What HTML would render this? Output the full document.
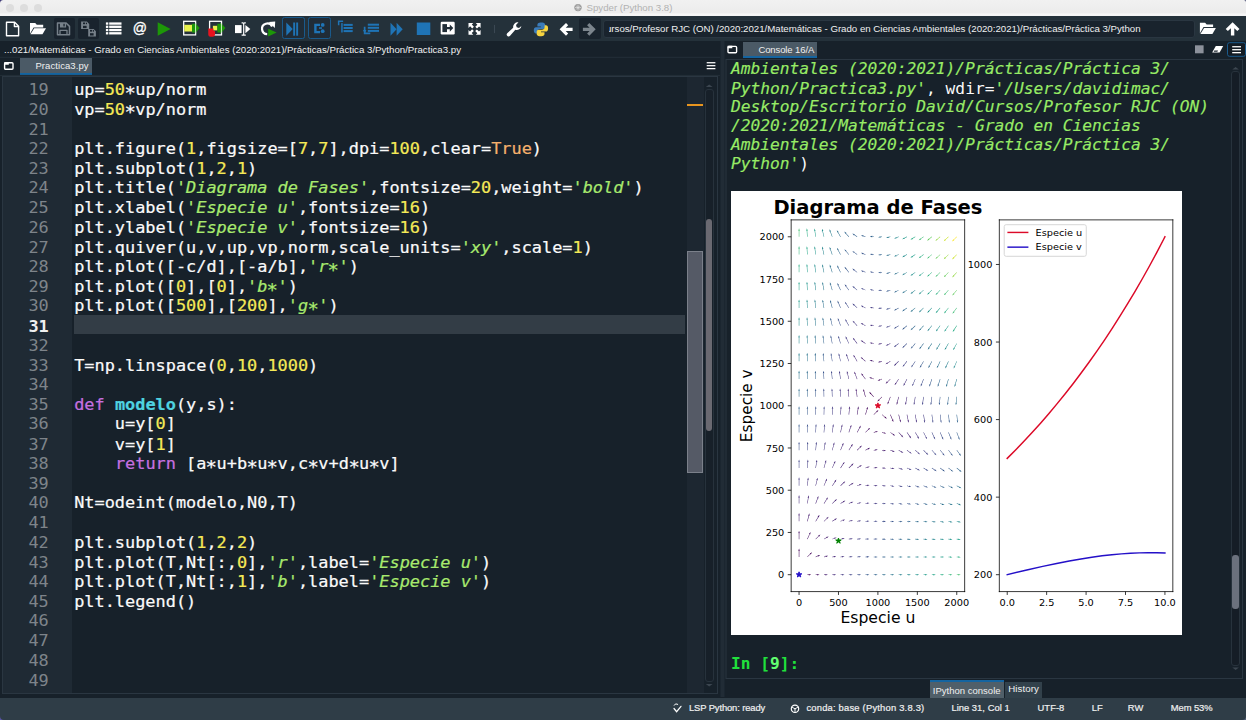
<!DOCTYPE html>
<html lang="es">
<head>
<meta charset="utf-8">
<title>Spyder (Python 3.8)</title>
<style>
*{box-sizing:border-box;margin:0;padding:0}
html,body{width:1246px;height:720px;overflow:hidden;background:#17212a}
body{position:relative;font-family:"Liberation Sans",sans-serif;color:#f0f0f0;font-size:11px}
.abs{position:absolute}
#titlebar{left:0;top:0;width:1246px;height:15.5px;background:linear-gradient(#f1f1f1 0,#ececec 78%,#f7f7f7 90%,#f4f4f4 100%)}
#titlebar .tl{position:absolute;top:4px;width:8px;height:8px;border-radius:50%;background:#dddddd}
#titlebar .t{position:absolute;left:586.5px;top:2.2px;font-size:9.7px;color:#b2b2b2;white-space:nowrap}
#toolbar{left:0;top:15.5px;width:1246px;height:25.500px;background:#24313a}
#toolbar svg{position:absolute;overflow:visible}
.dbox{position:absolute;background:#19232d;border-radius:2px}
.bbox{position:absolute;border:1px solid #1a5a8c;border-radius:2.5px;background:#202c37}
#combo{position:absolute;left:603px;top:4.500px;width:592px;height:18px;background:#19232d;border:1px solid #2a3641;border-radius:3px;overflow:hidden;white-space:nowrap}
#combo i{position:absolute;left:4.6px;top:-1px;width:580px;height:18px;overflow:hidden;font-style:normal}
#combo span{position:absolute;left:-2.6px;top:2.600px;font-size:9.7px;color:#f0f0f0}
#pathrow{left:0;top:41px;width:722px;height:16px;background:#17212a;white-space:nowrap;overflow:hidden}
#pathrow span{position:absolute;left:4px;top:2.6px;font-size:9.7px}
.tab{position:absolute;background:#4b5a66;border-bottom:2.5px solid #1464a0;color:#f0f0f0;font-size:9.5px;white-space:nowrap}
/* editor */
#editor{left:2px;top:76px;width:702px;height:617px;background:#17212a;overflow:hidden}
#gutter{left:0;top:0;width:70px;height:617px;background:#1f2a34}
#flags{left:684.5px;top:0;width:17.5px;height:617px;background:#1d2731}
#code{left:0;top:3.74px;width:684.5px;font-family:"DejaVu Sans Mono","Liberation Mono",monospace;font-size:16.9px;line-height:20.49px;color:#fafafa;transform:scaleY(.96);transform-origin:0 0}
#code div{height:20.49px;padding-left:72.2px;position:relative;white-space:pre;-webkit-text-stroke:.22px}
#code div.cur{background:none}
#curline{left:72.300px;top:238.700px;width:611.200px;height:19.700px;background:#333d46}
#code i{-webkit-text-stroke:0;position:absolute;left:0;width:46.8px;text-align:right;font-style:normal;color:#7e848a}
#code div.cur i{color:#f0f0f0;font-weight:bold}
.a{display:inline-block;font-weight:inherit;transform:translateY(3.2px) scale(1.12)}
.s{color:#a8ea6e;font-style:italic}
.n{color:#f5ea57}
.k{color:#c670e0}
.b{color:#f5b06c}
.f{color:#4fd3e1;font-weight:bold}
/* console */
#console{left:727px;top:59px;width:505px;height:619px;background:#17212a;overflow:hidden}
#ctext{left:4px;top:1px;transform:scaleY(.96);transform-origin:0 0;font-family:"DejaVu Sans Mono","Liberation Mono",monospace;font-size:16.22px;line-height:19.74px;white-space:pre;color:#fafafa}
#ctext .g{color:#98ec66;font-style:italic;-webkit-text-stroke:.15px #98ec66}
#fig{position:absolute;background:#fff;left:4.2px;top:131.9px;width:451px;height:443.85px}
#prompt{left:4px;top:595.5px;transform:scaleY(.96);transform-origin:0 0;font-family:"DejaVu Sans Mono","Liberation Mono",monospace;font-size:16.22px;line-height:19.74px;white-space:pre;color:#20e03c;font-weight:bold}
#status{left:0;top:698px;width:1246px;height:22px;background:#2f3d47}
#status span{position:absolute;top:3.7px;-webkit-text-stroke:.2px #f0f0f0;font-size:9.4px;white-space:nowrap;color:#f0f0f0}
</style>
</head>
<body>
<div id="titlebar" class="abs">
  <div class="tl" style="left:5.7px"></div><div class="tl" style="left:20px"></div><div class="tl" style="left:34.3px"></div>
  <div class="t" id="t_title" style="letter-spacing:-0.014px">Spyder (Python 3.8)</div>
</div>

<div id="toolbar" class="abs">
  <div class="dbox" style="left:53.800px;top:2.600px;width:21px;height:21.400px"></div>
  <div class="dbox" style="left:77.900px;top:2.600px;width:21px;height:21.400px"></div>
  <div class="bbox" style="left:282px;top:1.700px;width:23.200px;height:21.800px"></div>
  <div class="bbox" style="left:308.100px;top:1.700px;width:23.400px;height:21.800px"></div>
  <div class="dbox" style="left:579.400px;top:2.500px;width:21.400px;height:21px"></div>
  <svg style="left:0;top:0;width:1246px;height:25.500px" viewBox="0 15.500 1246 25.500">
<g fill="none" stroke="#fff" stroke-width="1.4" stroke-linejoin="round">
  <!-- new file -->
  <path d="M6.5 21.8h8.2l3.9 3.9v9.5h-12.1z"/><path d="M14.4 22v4h4"/>
</g>
<!-- open folder -->
<path fill="#fff" d="M30 22.6h5.2l1.6 1.7h6.4v2.6h-9.6l-3.6 6.3z"/><path fill="#fff" d="M34.2 27.7h11.8l-3.5 6.1h-12z"/>
<!-- save (disabled) -->
<g fill="none" stroke="#77818a" stroke-width="1.5" stroke-linejoin="round">
  <path d="M57.500 22.500h8.600l3.400 3.400v8.300h-12z"/>
  <path d="M60 34v-4.200h7v4.200" stroke-width="1.300"/>
</g>
<path fill="#77818a" d="M59.900 22.500h6.200v4.600h-6.200z"/><rect x="63.400" y="23.300" width="1.300" height="2.600" fill="#19232d"/>
<!-- save all -->
<g fill="#77818a">
  <path d="M81.100 21.100h5.800l2.300 2.300v5.100h-8.100z"/>
  <path d="M88.200 28.500h5.400l2.300 2.300v5.100h-7.700z"/>
</g>
<g fill="#19232d">
  <rect x="83" y="22" width="2.200" height="1.700"/><rect x="86" y="22.200" width="1" height="1.500"/><rect x="83" y="25.300" width="3.600" height="2.300"/>
  <rect x="90" y="29.400" width="2.200" height="1.700"/><rect x="93" y="29.600" width="1" height="1.500"/><rect x="90" y="32.700" width="3.600" height="2.300"/>
</g>
<!-- list -->
<g fill="#fff">
  <rect x="105.9" y="21.9" width="2.4" height="2.3"/><rect x="109.2" y="21.9" width="12.3" height="2.3"/>
  <rect x="105.9" y="25.15" width="2.4" height="2.3"/><rect x="109.2" y="25.15" width="12.3" height="2.3"/>
  <rect x="105.9" y="28.4" width="2.4" height="2.3"/><rect x="109.2" y="28.4" width="12.3" height="2.3"/>
  <rect x="105.9" y="31.65" width="2.4" height="2.3"/><rect x="109.2" y="31.65" width="12.3" height="2.3"/>
</g>
<!-- @ -->
<text x="139.8" y="32.3" text-anchor="middle" font-family="Liberation Sans, sans-serif" font-size="14" fill="#fff" stroke="#fff" stroke-width=".35">@</text>
<!-- run -->
<path fill="#1d9708" d="M157.7 21.7l12.9 6.75-12.9 6.75z"/>
<!-- run cell -->
<rect x="183.700" y="20.800" width="11.900" height="13.600" fill="none" stroke="#fff" stroke-width="1.300"/>
<rect x="184.300" y="24.300" width="7.700" height="6.700" fill="#e9f24c"/>
<path fill="#1d9708" d="M192 23.300h3v-1l4.600 5.300-4.600 5.300v-1h-3z"/><rect x="195" y="22.500" width="1.100" height="10.200" fill="#e8ffe0" opacity=".8"/>
<!-- run cell advance -->
<rect x="209.600" y="20.800" width="11.900" height="13.600" fill="none" stroke="#fff" stroke-width="1.300"/>
<rect x="212.900" y="25.300" width="4.500" height="4.600" fill="#e9f24c"/>
<path fill="#e8121d" d="M208.300 28h5.200v2.500h1.500v3.500q0 2.300-2.300 2.300h-2.200q-2.200 0-2.200-2.300z"/>
<path fill="#1d9708" d="M217.400 23.300h3.400v-1l4.600 5.300-4.600 5.300v-1h-3.400z"/><rect x="220.900" y="22.500" width="1.100" height="10.200" fill="#e8ffe0" opacity=".8"/>
<!-- run selection -->
<rect x="235" y="24.6" width="6.6" height="8" fill="#fff"/>
<path fill="none" stroke="#fff" stroke-width="1.2" d="M241.6 22.4h1.2q.9 0 .9.9v10.4q0 .9-.9.9h-1.2M245.8 22.4h-1.2q-.9 0-.9.9v10.4q0 .9.900.9h1.2"/>
<path fill="#fff" d="M245.4 24.4l4.9 4.2-4.900 4.200z"/>
<!-- re-run -->
<path fill="none" stroke="#fff" stroke-width="2.2" d="M267.200 33.600a5.300 5.300 0 1 1 4.900-7.600"/>
<path fill="#fff" d="M268.800 21.400l6.400-.4-.4 6.500z"/>
<path fill="#1d9708" d="M268.200 28.200l8.400 3.900-8.400 4z"/>
<!-- debug -->
<g fill="#1f74b6">
  <path d="M286.300 22l6.400 6.600-6.400 6.600z"/><rect x="293.200" y="22" width="1.900" height="13.200"/><rect x="296.200" y="22" width="1.900" height="13.200"/>
  <!-- step -->
  <path d="M314.200 23.300h5.800v2.200h-3.400v5h3.400v2.200h-5.800z"/><circle cx="322.700" cy="24.400" r="1.900"/><circle cx="322.700" cy="30.700" r="1.900"/><rect x="319" y="26.800" width="3" height="1.500"/>
  <!-- step into -->
  <path d="M337.900 19.900h5.200v1.500h-3.700v3.300h-1.500z"/><rect x="341.200" y="22.600" width="1.500" height="9.400"/>
  <rect x="343.600" y="23.400" width="9.100" height="2"/><rect x="343.600" y="26.500" width="9.100" height="2"/><rect x="343.600" y="29.600" width="9.100" height="2"/>
  <!-- step return -->
  <rect x="367.800" y="23.200" width="11.200" height="2"/><rect x="367.800" y="26.300" width="11.200" height="2"/><rect x="367.800" y="29.400" width="11.200" height="2"/>
  <path d="M363.800 26.300h1.700v5.800h4.800v1.600h-6.500z"/><path d="M363 29.500l1.700 3.400 1.700-3.400z"/>
  <!-- continue -->
  <path d="M390.500 22.300l6.100 6.450-6.100 6.450z"/><path d="M396.600 22.300l6.100 6.450-6.100 6.450z"/>
  <!-- stop -->
  <rect x="416.800" y="22" width="13.500" height="12.500"/>
</g>
<!-- maximize pane -->
<rect x="440.700" y="21.200" width="14" height="12.800" rx="1.200" fill="#fff"/>
<rect x="442.400" y="23.600" width="4.600" height="8" fill="#222e38"/>
<path fill="#222e38" d="M447 26.500h2.800v-2.500l3.500 3.600-3.500 3.600v-2.500h-2.800z"/>
<!-- fullscreen -->
<g fill="#fff">
  <path d="M468.500 22.600h4.800l-1.500 1.500 2.100 2.100-1.700 1.700-2.100-2.100-1.600 1.600z"/>
  <path d="M480.600 22.600v4.800l-1.500-1.500-2.100 2.100-1.700-1.700 2.100-2.100-1.600-1.600z"/>
  <path d="M468.500 34.200v-4.800l1.500 1.500 2.100-2.100 1.700 1.700-2.100 2.100 1.600 1.600z"/>
  <path d="M480.600 34.200h-4.800l1.500-1.500-2.100-2.100 1.700-1.700 2.100 2.100 1.600-1.600z"/>
</g>
<rect x="494" y="24.400" width="1" height="8.200" fill="#3b4853"/>
<!-- wrench -->
<path fill="#fff" d="M521.400 25.400a4.700 4.700 0 0 1-6.100 3.800l-5.200 6a1.900 1.900 0 0 1-2.900-2.500l6-5.400a4.700 4.700 0 0 1 5.300-5.500l-2.500 2.700.7 2.300 2.300.6z"/>
<!-- python -->
<path fill="#3b7cba" d="M540.700 22c-2.600 0-3.300 1.100-3.300 2.300v1.700h3.500v.7h-4.900c-1.400 0-2.200 1.200-2.200 3.100 0 2 .8 3.200 2.200 3.200h1.300v-2c0-1.400 1.200-2.500 2.600-2.500h3.300c1.100 0 2-.9 2-2v-2.200c0-1.200-1.200-2.300-2.700-2.300z"/>
<path fill="#f6d340" d="M541.200 35.700c2.600 0 3.300-1.100 3.300-2.300v-1.700h-3.500v-.7h4.900c1.400 0 2.200-1.200 2.200-3.100 0-2-.8-3.200-2.200-3.200h-1.300v2c0 1.400-1.200 2.500-2.600 2.500h-3.300c-1.100 0-2 .9-2 2v2.200c0 1.200 1.200 2.300 2.700 2.300z"/>
<!-- back -->
<path fill="#fff" d="M559.600 28.850l6.400-6.300 2.200 2.200-2.500 2.400h6.900v3.400h-6.900l2.500 2.400-2.200 2.200z"/>
<!-- forward (disabled) -->
<path fill="#7c858d" d="M595.700 28.850l-6.400-6.300-2.200 2.200 2.500 2.400h-6.700v3.400h6.700l-2.500 2.400 2.200 2.200z"/>
<!-- folder right -->
<path fill="#fff" d="M1199.900 22.200h5.200l1.600 1.700h6.400v2.600h-9.600l-3.600 6.300z"/><path fill="#fff" d="M1204.100 27.400h11.800l-3.500 6.100h-12z"/>
<!-- up arrow -->
<path fill="#fff" d="M1232.600 21.800l6.900 6.600-2.200 2.200-3-2.900v7.300h-3.400v-7.300l-3 2.900-2.200-2.200z"/>
</svg>

  <div id="combo"><i><span id="t_combo" style="letter-spacing:-0.024px">ursos/Profesor RJC (ON) /2020:2021/Matemáticas - Grado en Ciencias Ambientales (2020:2021)/Prácticas/Práctica 3/Python</span></i></div>
</div>

<div id="pathrow" class="abs"><span id="t_path" style="letter-spacing:-0.012px">...021/Matemáticas - Grado en Ciencias Ambientales (2020:2021)/Prácticas/Práctica 3/Python/Practica3.py</span></div>

<!-- left tab row -->
<div class="tab" style="left:19.5px;top:58px;width:72.5px;height:16.5px"><span id="t_tab1" style="letter-spacing:0.077px;position:absolute;left:15.9px;top:2px">Practica3.py</span></div>

<div id="editor" class="abs">
  <div id="gutter" class="abs"></div>
  <div id="flags" class="abs">
    <div class="abs" style="left:0.7px;top:27.9px;width:15.6px;height:2.2px;background:#e8951f"></div>
    <div class="abs" style="left:0px;top:174.9px;width:16.7px;height:222px;background:#555a66;border:1px solid #7b808a"></div>
  </div>
  <div id="curline" class="abs"></div>
  <div id="code" class="abs">
<div><i>19</i>up=<span class="n">50</span><b class="a">*</b>up/norm</div><div><i>20</i>vp=<span class="n">50</span><b class="a">*</b>vp/norm</div><div><i>21</i></div><div><i>22</i>plt.figure(<span class="n">1</span>,figsize=[<span class="n">7</span>,<span class="n">7</span>],dpi=<span class="n">100</span>,clear=<span class="b">True</span>)</div><div><i>23</i>plt.subplot(<span class="n">1</span>,<span class="n">2</span>,<span class="n">1</span>)</div><div><i>24</i>plt.title(<span class="s">'Diagrama de Fases'</span>,fontsize=<span class="n">20</span>,weight=<span class="s">'bold'</span>)</div><div><i>25</i>plt.xlabel(<span class="s">'Especie u'</span>,fontsize=<span class="n">16</span>)</div><div><i>26</i>plt.ylabel(<span class="s">'Especie v'</span>,fontsize=<span class="n">16</span>)</div><div><i>27</i>plt.quiver(u,v,up,vp,norm,scale_units=<span class="s">'xy'</span>,scale=<span class="n">1</span>)</div><div><i>28</i>plt.plot([-c/d],[-a/b],<span class="s">'r<b class="a">*</b>'</span>)</div><div><i>29</i>plt.plot([<span class="n">0</span>],[<span class="n">0</span>],<span class="s">'b<b class="a">*</b>'</span>)</div><div><i>30</i>plt.plot([<span class="n">500</span>],[<span class="n">200</span>],<span class="s">'g<b class="a">*</b>'</span>)</div><div class="cur"><i>31</i></div><div><i>32</i></div><div><i>33</i>T=np.linspace(<span class="n">0</span>,<span class="n">10</span>,<span class="n">1000</span>)</div><div><i>34</i></div><div><i>35</i><span class="k">def</span> <span class="f">modelo</span>(y,s):</div><div><i>36</i>    u=y[<span class="n">0</span>]</div><div><i>37</i>    v=y[<span class="n">1</span>]</div><div><i>38</i>    <span class="k">return</span> [a<b class="a">*</b>u+b<b class="a">*</b>u<b class="a">*</b>v,c<b class="a">*</b>v+d<b class="a">*</b>u<b class="a">*</b>v]</div><div><i>39</i></div><div><i>40</i>Nt=odeint(modelo,N0,T)</div><div><i>41</i></div><div><i>42</i>plt.subplot(<span class="n">1</span>,<span class="n">2</span>,<span class="n">2</span>)</div><div><i>43</i>plt.plot(T,Nt[:,<span class="n">0</span>],<span class="s">'r'</span>,label=<span class="s">'Especie u'</span>)</div><div><i>44</i>plt.plot(T,Nt[:,<span class="n">1</span>],<span class="s">'b'</span>,label=<span class="s">'Especie v'</span>)</div><div><i>45</i>plt.legend()</div><div><i>46</i></div><div><i>47</i></div><div><i>48</i></div><div><i>49</i></div>  </div>
</div>
<!-- editor scrollbar -->
<div class="abs" style="left:705px;top:89px;width:8.5px;height:593px;background:#172029;border:1px solid #27323c;border-radius:3px"></div>
<div class="abs" style="left:706.2px;top:219px;width:6px;height:212px;background:#6a6971;border-radius:3px"></div>

<!-- right pane tab row -->
<div class="tab" style="left:743px;top:42.2px;width:73.8px;height:16px"><span id="t_tab2" style="letter-spacing:-0.104px;position:absolute;left:15.4px;top:1.7px">Console 16/A</span></div>

<div id="console" class="abs">
<div id="ctext" class="abs"><span class="g">Ambientales (2020:2021)/Prácticas/Práctica 3/
Python/Practica3.py'</span>, wdir=<span class="g">'/Users/davidimac/
Desktop/Escritorio David/Cursos/Profesor RJC (ON)
/2020:2021/Matemáticas - Grado en Ciencias
Ambientales (2020:2021)/Prácticas/Práctica 3/
Python'</span>)</div>
<svg id="fig" viewBox="-2.45 -1.77 461.58 463.4" preserveAspectRatio="none"> <defs> <style>#fig *{stroke-linejoin: round; stroke-linecap: butt}</style> </defs> <g id="figure_1"> <g id="patch_1"> <path d="M 0 459.84 L 459.99 459.84 L 459.99 0 L 0 0 z " style="fill: #ffffff"/> </g> <g id="axes_1"> <g id="patch_2"> <path d="M 59.13 416.47 L 236.68 416.47 L 236.68 28.39 L 59.13 28.39 z " style="fill: #ffffff"/> </g> <g id="Quiver_1"> <path clip-path="url(#pe929c7379b)" style="fill: none"/> <path d="M 75.70 398.57 L 77.33 398.57 L 77.07 398.03 L 79.73 398.83 L 77.07 399.63 L 77.33 399.10 L 75.70 399.10 L 75.70 398.57 " clip-path="url(#pe929c7379b)" style="fill: #450559"/> <path d="M 84.19 398.57 L 85.83 398.57 L 85.56 398.03 L 88.23 398.83 L 85.56 399.63 L 85.83 399.10 L 84.19 399.10 L 84.19 398.57 " clip-path="url(#pe929c7379b)" style="fill: #471365"/> <path d="M 92.69 398.57 L 94.32 398.57 L 94.06 398.03 L 96.72 398.83 L 94.06 399.63 L 94.32 399.10 L 92.69 399.10 L 92.69 398.57 " clip-path="url(#pe929c7379b)" style="fill: #482071"/> <path d="M 101.18 398.57 L 102.82 398.57 L 102.55 398.03 L 105.22 398.83 L 102.55 399.63 L 102.82 399.10 L 101.18 399.10 L 101.18 398.57 " clip-path="url(#pe929c7379b)" style="fill: #472d7b"/> <path d="M 109.68 398.57 L 111.31 398.57 L 111.05 398.03 L 113.71 398.83 L 111.05 399.63 L 111.31 399.10 L 109.68 399.10 L 109.68 398.57 " clip-path="url(#pe929c7379b)" style="fill: #443983"/> <path d="M 118.17 398.57 L 119.81 398.57 L 119.54 398.03 L 122.21 398.83 L 119.54 399.63 L 119.81 399.10 L 118.17 399.10 L 118.17 398.57 " clip-path="url(#pe929c7379b)" style="fill: #404588"/> <path d="M 126.67 398.57 L 128.30 398.57 L 128.04 398.03 L 130.70 398.83 L 128.04 399.63 L 128.30 399.10 L 126.67 399.10 L 126.67 398.57 " clip-path="url(#pe929c7379b)" style="fill: #3c4f8a"/> <path d="M 135.16 398.57 L 136.80 398.57 L 136.53 398.03 L 139.20 398.83 L 136.53 399.63 L 136.80 399.10 L 135.16 399.10 L 135.16 398.57 " clip-path="url(#pe929c7379b)" style="fill: #375a8c"/> <path d="M 143.66 398.57 L 145.29 398.57 L 145.03 398.03 L 147.69 398.83 L 145.03 399.63 L 145.29 399.10 L 143.66 399.10 L 143.66 398.57 " clip-path="url(#pe929c7379b)" style="fill: #32648e"/> <path d="M 152.15 398.57 L 153.79 398.57 L 153.52 398.03 L 156.19 398.83 L 153.52 399.63 L 153.79 399.10 L 152.15 399.10 L 152.15 398.57 " clip-path="url(#pe929c7379b)" style="fill: #2e6e8e"/> <path d="M 160.65 398.57 L 162.28 398.57 L 162.02 398.03 L 164.68 398.83 L 162.02 399.63 L 162.28 399.10 L 160.65 399.10 L 160.65 398.57 " clip-path="url(#pe929c7379b)" style="fill: #2a768e"/> <path d="M 169.14 398.57 L 170.78 398.57 L 170.51 398.03 L 173.18 398.83 L 170.51 399.63 L 170.78 399.10 L 169.14 399.10 L 169.14 398.57 " clip-path="url(#pe929c7379b)" style="fill: #27808e"/> <path d="M 177.64 398.57 L 179.27 398.57 L 179.01 398.03 L 181.67 398.83 L 179.01 399.63 L 179.27 399.10 L 177.64 399.10 L 177.64 398.57 " clip-path="url(#pe929c7379b)" style="fill: #23898e"/> <path d="M 186.13 398.57 L 187.77 398.57 L 187.50 398.03 L 190.17 398.83 L 187.50 399.63 L 187.77 399.10 L 186.13 399.10 L 186.13 398.57 " clip-path="url(#pe929c7379b)" style="fill: #20928c"/> <path d="M 194.63 398.57 L 196.26 398.57 L 196.00 398.03 L 198.66 398.83 L 196.00 399.63 L 196.26 399.10 L 194.63 399.10 L 194.63 398.57 " clip-path="url(#pe929c7379b)" style="fill: #1e9c89"/> <path d="M 203.12 398.57 L 204.76 398.57 L 204.49 398.03 L 207.16 398.83 L 204.49 399.63 L 204.76 399.10 L 203.12 399.10 L 203.12 398.57 " clip-path="url(#pe929c7379b)" style="fill: #20a486"/> <path d="M 211.62 398.57 L 213.25 398.57 L 212.99 398.03 L 215.65 398.83 L 212.99 399.63 L 213.25 399.10 L 211.62 399.10 L 211.62 398.57 " clip-path="url(#pe929c7379b)" style="fill: #27ad81"/> <path d="M 220.11 398.57 L 221.75 398.57 L 221.48 398.03 L 224.15 398.83 L 221.48 399.63 L 221.75 399.10 L 220.11 399.10 L 220.11 398.57 " clip-path="url(#pe929c7379b)" style="fill: #34b679"/> <path d="M 228.61 398.57 L 230.24 398.57 L 229.98 398.03 L 232.64 398.83 L 229.98 399.63 L 230.24 399.10 L 228.61 399.10 L 228.61 398.57 " clip-path="url(#pe929c7379b)" style="fill: #44bf70"/> <path d="M 66.93 380.26 L 66.93 373.84 L 66.40 374.11 L 67.20 371.44 L 68.00 374.11 L 67.47 373.84 L 67.47 380.26 L 66.93 380.26 " clip-path="url(#pe929c7379b)" style="fill: #450559"/> <path d="M 75.51 380.08 L 78.66 376.92 L 78.10 376.73 L 80.54 375.41 L 79.23 377.86 L 79.04 377.30 L 75.88 380.45 L 75.51 380.08 " clip-path="url(#pe929c7379b)" style="fill: #46085c"/> <path d="M 84.08 380.02 L 86.58 378.92 L 86.12 378.54 L 88.88 378.19 L 86.77 380.00 L 86.80 379.40 L 84.30 380.51 L 84.08 380.02 " clip-path="url(#pe929c7379b)" style="fill: #471365"/> <path d="M 92.62 380.01 L 94.63 379.49 L 94.24 379.04 L 97.02 379.16 L 94.64 380.59 L 94.77 380.01 L 92.75 380.52 L 92.62 380.01 " clip-path="url(#pe929c7379b)" style="fill: #481d6f"/> <path d="M 101.14 380.00 L 102.94 379.71 L 102.59 379.23 L 105.35 379.59 L 102.85 380.80 L 103.03 380.23 L 101.22 380.53 L 101.14 380.00 " clip-path="url(#pe929c7379b)" style="fill: #482878"/> <path d="M 109.65 380.00 L 111.36 379.82 L 111.04 379.32 L 113.77 379.83 L 111.21 380.90 L 111.42 380.35 L 109.70 380.53 L 109.65 380.00 " clip-path="url(#pe929c7379b)" style="fill: #46337f"/> <path d="M 118.15 380.00 L 119.82 379.88 L 119.52 379.37 L 122.23 379.98 L 119.63 380.96 L 119.86 380.41 L 118.19 380.53 L 118.15 380.00 " clip-path="url(#pe929c7379b)" style="fill: #433e85"/> <path d="M 126.65 380.00 L 128.30 379.93 L 128.02 379.41 L 130.71 380.09 L 128.08 381.00 L 128.33 380.46 L 126.68 380.53 L 126.65 380.00 " clip-path="url(#pe929c7379b)" style="fill: #3f4788"/> <path d="M 135.15 380.00 L 136.80 379.96 L 136.52 379.43 L 139.20 380.17 L 136.55 381.03 L 136.81 380.49 L 135.17 380.53 L 135.15 380.00 " clip-path="url(#pe929c7379b)" style="fill: #3b518b"/> <path d="M 143.65 380.00 L 145.29 379.99 L 145.02 379.46 L 147.69 380.24 L 145.03 381.05 L 145.30 380.52 L 143.66 380.53 L 143.65 380.00 " clip-path="url(#pe929c7379b)" style="fill: #375b8d"/> <path d="M 152.15 380.00 L 153.79 380.01 L 153.53 379.47 L 156.19 380.29 L 153.52 381.07 L 153.79 380.54 L 152.15 380.53 L 152.15 380.00 " clip-path="url(#pe929c7379b)" style="fill: #33638d"/> <path d="M 160.65 380.00 L 162.29 380.02 L 162.03 379.49 L 164.68 380.33 L 162.01 381.08 L 162.28 380.56 L 160.64 380.53 L 160.65 380.00 " clip-path="url(#pe929c7379b)" style="fill: #2f6c8e"/> <path d="M 169.15 380.00 L 170.79 380.04 L 170.54 379.50 L 173.18 380.36 L 170.50 381.10 L 170.78 380.57 L 169.13 380.53 L 169.15 380.00 " clip-path="url(#pe929c7379b)" style="fill: #2b748e"/> <path d="M 177.64 380.00 L 179.29 380.05 L 179.04 379.51 L 181.68 380.39 L 178.99 381.11 L 179.27 380.58 L 177.63 380.53 L 177.64 380.00 " clip-path="url(#pe929c7379b)" style="fill: #287d8e"/> <path d="M 186.14 380.00 L 187.79 380.06 L 187.54 379.52 L 190.17 380.42 L 187.48 381.11 L 187.77 380.59 L 186.12 380.53 L 186.14 380.00 " clip-path="url(#pe929c7379b)" style="fill: #25848e"/> <path d="M 194.64 380.00 L 196.29 380.07 L 196.04 379.52 L 198.67 380.44 L 195.98 381.12 L 196.26 380.60 L 194.61 380.53 L 194.64 380.00 " clip-path="url(#pe929c7379b)" style="fill: #228d8d"/> <path d="M 203.13 380.00 L 204.79 380.08 L 204.55 379.53 L 207.17 380.46 L 204.47 381.13 L 204.76 380.61 L 203.11 380.53 L 203.13 380.00 " clip-path="url(#pe929c7379b)" style="fill: #1f958b"/> <path d="M 211.63 380.00 L 213.29 380.08 L 213.05 379.54 L 215.67 380.47 L 212.96 381.13 L 213.26 380.62 L 211.60 380.53 L 211.63 380.00 " clip-path="url(#pe929c7379b)" style="fill: #1f9e89"/> <path d="M 220.12 380.00 L 221.78 380.09 L 221.55 379.54 L 224.16 380.49 L 221.46 381.14 L 221.75 380.62 L 220.10 380.53 L 220.12 380.00 " clip-path="url(#pe929c7379b)" style="fill: #21a685"/> <path d="M 228.62 380.00 L 230.28 380.10 L 230.05 379.55 L 232.66 380.50 L 229.95 381.14 L 230.25 380.63 L 228.59 380.53 L 228.62 380.00 " clip-path="url(#pe929c7379b)" style="fill: #27ad81"/> <path d="M 66.93 361.70 L 66.93 355.27 L 66.40 355.54 L 67.20 352.88 L 68.00 355.54 L 67.47 355.27 L 67.47 361.70 L 66.93 361.70 " clip-path="url(#pe929c7379b)" style="fill: #471365"/> <path d="M 75.45 361.59 L 77.81 356.25 L 77.21 356.28 L 79.02 354.16 L 78.67 356.92 L 78.29 356.46 L 75.94 361.80 L 75.45 361.59 " clip-path="url(#pe929c7379b)" style="fill: #471365"/> <path d="M 84.00 361.51 L 87.16 358.35 L 86.59 358.16 L 89.04 356.85 L 87.72 359.29 L 87.53 358.73 L 84.38 361.88 L 84.00 361.51 " clip-path="url(#pe929c7379b)" style="fill: #481769"/> <path d="M 92.55 361.46 L 95.35 359.85 L 94.85 359.52 L 97.56 358.88 L 95.65 360.90 L 95.62 360.31 L 92.82 361.93 L 92.55 361.46 " clip-path="url(#pe929c7379b)" style="fill: #481d6f"/> <path d="M 101.09 361.44 L 103.40 360.60 L 102.96 360.19 L 105.74 360.02 L 103.51 361.69 L 103.58 361.10 L 101.27 361.95 L 101.09 361.44 " clip-path="url(#pe929c7379b)" style="fill: #482576"/> <path d="M 109.61 361.44 L 111.59 360.96 L 111.21 360.51 L 113.98 360.66 L 111.58 362.06 L 111.72 361.48 L 109.74 361.95 L 109.61 361.44 " clip-path="url(#pe929c7379b)" style="fill: #472e7c"/> <path d="M 118.13 361.43 L 119.92 361.15 L 119.58 360.67 L 122.33 361.05 L 119.82 362.25 L 120.00 361.68 L 118.21 361.96 L 118.13 361.43 " clip-path="url(#pe929c7379b)" style="fill: #453781"/> <path d="M 126.64 361.43 L 128.34 361.27 L 128.02 360.76 L 130.75 361.31 L 128.17 362.35 L 128.39 361.80 L 126.69 361.96 L 126.64 361.43 " clip-path="url(#pe929c7379b)" style="fill: #423f85"/> <path d="M 135.15 361.43 L 136.80 361.35 L 136.51 360.83 L 139.21 361.49 L 136.59 362.42 L 136.83 361.88 L 135.17 361.96 L 135.15 361.43 " clip-path="url(#pe929c7379b)" style="fill: #3f4889"/> <path d="M 143.65 361.43 L 145.29 361.40 L 145.02 360.88 L 147.69 361.64 L 145.04 362.47 L 145.30 361.94 L 143.66 361.96 L 143.65 361.43 " clip-path="url(#pe929c7379b)" style="fill: #3c508b"/> <path d="M 152.15 361.43 L 153.79 361.45 L 153.53 360.91 L 156.19 361.75 L 153.51 362.51 L 153.79 361.98 L 152.15 361.96 L 152.15 361.43 " clip-path="url(#pe929c7379b)" style="fill: #38598c"/> <path d="M 160.65 361.43 L 162.30 361.49 L 162.06 360.95 L 164.69 361.84 L 162.00 362.54 L 162.28 362.02 L 160.64 361.96 L 160.65 361.43 " clip-path="url(#pe929c7379b)" style="fill: #34618d"/> <path d="M 169.15 361.43 L 170.81 361.52 L 170.58 360.97 L 173.19 361.92 L 170.49 362.57 L 170.78 362.05 L 169.13 361.96 L 169.15 361.43 " clip-path="url(#pe929c7379b)" style="fill: #30698e"/> <path d="M 177.65 361.43 L 179.33 361.55 L 179.10 361.00 L 181.70 361.99 L 178.99 362.59 L 179.29 362.08 L 177.62 361.96 L 177.65 361.43 " clip-path="url(#pe929c7379b)" style="fill: #2d708e"/> <path d="M 186.15 361.43 L 187.84 361.57 L 187.62 361.02 L 190.21 362.04 L 187.48 362.61 L 187.79 362.11 L 186.11 361.96 L 186.15 361.43 " clip-path="url(#pe929c7379b)" style="fill: #2a778e"/> <path d="M 194.65 361.43 L 196.35 361.60 L 196.14 361.04 L 198.71 362.09 L 195.98 362.63 L 196.30 362.13 L 194.60 361.96 L 194.65 361.43 " clip-path="url(#pe929c7379b)" style="fill: #277f8e"/> <path d="M 203.15 361.43 L 204.86 361.62 L 204.66 361.06 L 207.22 362.14 L 204.49 362.65 L 204.81 362.15 L 203.09 361.96 L 203.15 361.43 " clip-path="url(#pe929c7379b)" style="fill: #24868e"/> <path d="M 211.65 361.43 L 213.38 361.63 L 213.17 361.07 L 215.72 362.18 L 212.99 362.66 L 213.31 362.16 L 211.58 361.96 L 211.65 361.43 " clip-path="url(#pe929c7379b)" style="fill: #218e8d"/> <path d="M 220.14 361.43 L 221.89 361.65 L 221.69 361.09 L 224.23 362.21 L 221.49 362.67 L 221.82 362.18 L 220.08 361.96 L 220.14 361.43 " clip-path="url(#pe929c7379b)" style="fill: #1f958b"/> <path d="M 228.64 361.43 L 230.39 361.66 L 230.20 361.10 L 232.73 362.25 L 229.99 362.69 L 230.32 362.19 L 228.57 361.96 L 228.64 361.43 " clip-path="url(#pe929c7379b)" style="fill: #1e9d89"/> <path d="M 66.93 343.13 L 66.93 336.70 L 66.40 336.97 L 67.20 334.31 L 68.00 336.97 L 67.47 336.70 L 67.47 343.13 L 66.93 343.13 " clip-path="url(#pe929c7379b)" style="fill: #482071"/> <path d="M 75.44 343.06 L 76.97 337.05 L 76.39 337.17 L 77.82 334.79 L 77.94 337.57 L 77.49 337.18 L 75.95 343.19 L 75.44 343.06 " clip-path="url(#pe929c7379b)" style="fill: #481d6f"/> <path d="M 83.96 342.99 L 86.71 338.23 L 86.12 338.19 L 88.14 336.29 L 87.50 338.99 L 87.17 338.50 L 84.42 343.26 L 83.96 342.99 " clip-path="url(#pe929c7379b)" style="fill: #481d6f"/> <path d="M 92.50 342.94 L 95.65 339.78 L 95.09 339.60 L 97.53 338.28 L 96.22 340.73 L 96.03 340.16 L 92.87 343.31 L 92.50 342.94 " clip-path="url(#pe929c7379b)" style="fill: #481f70"/> <path d="M 101.04 342.90 L 103.93 341.06 L 103.42 340.76 L 106.10 340.00 L 104.28 342.11 L 104.22 341.51 L 101.32 343.35 L 101.04 342.90 " clip-path="url(#pe929c7379b)" style="fill: #482475"/> <path d="M 109.57 342.88 L 112.01 341.87 L 111.56 341.48 L 114.32 341.20 L 112.17 342.96 L 112.21 342.36 L 109.78 343.37 L 109.57 342.88 " clip-path="url(#pe929c7379b)" style="fill: #482979"/> <path d="M 118.10 342.87 L 120.15 342.32 L 119.76 341.87 L 122.54 341.95 L 120.17 343.42 L 120.29 342.83 L 118.24 343.38 L 118.10 342.87 " clip-path="url(#pe929c7379b)" style="fill: #472f7d"/> <path d="M 126.62 342.86 L 128.43 342.57 L 128.08 342.08 L 130.84 342.44 L 128.34 343.66 L 128.52 343.09 L 126.71 343.39 L 126.62 342.86 " clip-path="url(#pe929c7379b)" style="fill: #453781"/> <path d="M 135.14 342.86 L 136.83 342.72 L 136.51 342.21 L 139.24 342.77 L 136.65 343.80 L 136.87 343.25 L 135.18 343.39 L 135.14 342.86 " clip-path="url(#pe929c7379b)" style="fill: #423f85"/> <path d="M 143.65 342.86 L 145.29 342.82 L 145.01 342.29 L 147.69 343.02 L 145.05 343.89 L 145.30 343.35 L 143.66 343.39 L 143.65 342.86 " clip-path="url(#pe929c7379b)" style="fill: #404688"/> <path d="M 152.16 342.86 L 153.80 342.90 L 153.54 342.36 L 156.19 343.22 L 153.51 343.96 L 153.79 343.43 L 152.14 343.39 L 152.16 342.86 " clip-path="url(#pe929c7379b)" style="fill: #3d4e8a"/> <path d="M 160.66 342.86 L 162.33 342.97 L 162.09 342.42 L 164.70 343.38 L 161.99 344.01 L 162.29 343.50 L 160.63 343.39 L 160.66 342.86 " clip-path="url(#pe929c7379b)" style="fill: #39558c"/> <path d="M 169.17 342.86 L 170.87 343.02 L 170.65 342.47 L 173.23 343.52 L 170.50 344.06 L 170.81 343.56 L 169.11 343.39 L 169.17 342.86 " clip-path="url(#pe929c7379b)" style="fill: #365d8d"/> <path d="M 177.67 342.86 L 179.41 343.08 L 179.21 342.52 L 181.75 343.64 L 179.01 344.10 L 179.34 343.61 L 177.60 343.39 L 177.67 342.86 " clip-path="url(#pe929c7379b)" style="fill: #32648e"/> <path d="M 186.17 342.86 L 187.95 343.13 L 187.76 342.56 L 190.28 343.74 L 187.53 344.14 L 187.87 343.65 L 186.09 343.39 L 186.17 342.86 " clip-path="url(#pe929c7379b)" style="fill: #2f6b8e"/> <path d="M 194.67 342.86 L 196.49 343.17 L 196.32 342.60 L 198.81 343.83 L 196.05 344.18 L 196.40 343.70 L 194.58 343.39 L 194.67 342.86 " clip-path="url(#pe929c7379b)" style="fill: #2c718e"/> <path d="M 203.17 342.86 L 205.03 343.21 L 204.86 342.64 L 207.33 343.92 L 204.57 344.21 L 204.93 343.74 L 203.07 343.39 L 203.17 342.86 " clip-path="url(#pe929c7379b)" style="fill: #2a788e"/> <path d="M 211.67 342.87 L 213.56 343.25 L 213.41 342.68 L 215.86 343.99 L 213.09 344.24 L 213.45 343.77 L 211.56 343.39 L 211.67 342.87 " clip-path="url(#pe929c7379b)" style="fill: #277f8e"/> <path d="M 220.17 342.87 L 222.09 343.29 L 221.95 342.71 L 224.38 344.06 L 221.60 344.27 L 221.98 343.81 L 220.05 343.39 L 220.17 342.87 " clip-path="url(#pe929c7379b)" style="fill: #25858e"/> <path d="M 228.67 342.87 L 230.62 343.32 L 230.48 342.74 L 232.90 344.12 L 230.12 344.30 L 230.50 343.84 L 228.55 343.39 L 228.67 342.87 " clip-path="url(#pe929c7379b)" style="fill: #228c8d"/> <path d="M 66.93 324.56 L 66.93 318.14 L 66.40 318.40 L 67.20 315.74 L 68.00 318.40 L 67.47 318.14 L 67.47 324.56 L 66.93 324.56 " clip-path="url(#pe929c7379b)" style="fill: #472d7b"/> <path d="M 75.43 324.52 L 76.44 318.26 L 75.88 318.44 L 77.09 315.94 L 77.45 318.70 L 76.97 318.35 L 75.96 324.60 L 75.43 324.52 " clip-path="url(#pe929c7379b)" style="fill: #482878"/> <path d="M 83.94 324.47 L 86.01 318.83 L 85.41 318.90 L 87.08 316.67 L 86.91 319.45 L 86.51 319.02 L 84.44 324.65 L 83.94 324.47 " clip-path="url(#pe929c7379b)" style="fill: #482576"/> <path d="M 92.46 324.42 L 95.33 319.89 L 94.74 319.83 L 96.84 318.01 L 96.09 320.69 L 95.78 320.18 L 92.91 324.70 L 92.46 324.42 " clip-path="url(#pe929c7379b)" style="fill: #482475"/> <path d="M 100.99 324.37 L 104.15 321.22 L 103.58 321.03 L 106.03 319.71 L 104.71 322.16 L 104.52 321.59 L 101.37 324.75 L 100.99 324.37 " clip-path="url(#pe929c7379b)" style="fill: #482475"/> <path d="M 109.53 324.34 L 112.45 322.42 L 111.94 322.12 L 114.61 321.33 L 112.82 323.46 L 112.75 322.87 L 109.82 324.78 L 109.53 324.34 " clip-path="url(#pe929c7379b)" style="fill: #482677"/> <path d="M 118.07 324.31 L 120.52 323.27 L 120.07 322.88 L 122.83 322.58 L 120.69 324.36 L 120.73 323.76 L 118.27 324.80 L 118.07 324.31 " clip-path="url(#pe929c7379b)" style="fill: #472a7a"/> <path d="M 126.60 324.30 L 128.63 323.77 L 128.23 323.33 L 131.01 323.43 L 128.64 324.87 L 128.76 324.29 L 126.73 324.82 L 126.60 324.30 " clip-path="url(#pe929c7379b)" style="fill: #472f7d"/> <path d="M 135.12 324.29 L 136.88 324.05 L 136.55 323.56 L 139.29 323.99 L 136.76 325.15 L 136.96 324.58 L 135.20 324.82 L 135.12 324.29 " clip-path="url(#pe929c7379b)" style="fill: #453581"/> <path d="M 143.64 324.29 L 145.29 324.23 L 145.01 323.70 L 147.70 324.39 L 145.07 325.30 L 145.32 324.76 L 143.67 324.82 L 143.64 324.29 " clip-path="url(#pe929c7379b)" style="fill: #443b84"/> <path d="M 152.16 324.29 L 153.81 324.35 L 153.56 323.81 L 156.19 324.71 L 153.50 325.41 L 153.79 324.88 L 152.14 324.82 L 152.16 324.29 " clip-path="url(#pe929c7379b)" style="fill: #414287"/> <path d="M 160.67 324.29 L 162.37 324.46 L 162.16 323.91 L 164.73 324.96 L 162.00 325.50 L 162.32 324.99 L 160.62 324.82 L 160.67 324.29 " clip-path="url(#pe929c7379b)" style="fill: #3f4889"/> <path d="M 169.18 324.29 L 170.97 324.57 L 170.78 324.00 L 173.30 325.19 L 170.54 325.58 L 170.89 325.09 L 169.10 324.82 L 169.18 324.29 " clip-path="url(#pe929c7379b)" style="fill: #3c508b"/> <path d="M 177.69 324.30 L 179.56 324.66 L 179.40 324.09 L 181.86 325.39 L 179.10 325.66 L 179.46 325.19 L 177.58 324.82 L 177.69 324.30 " clip-path="url(#pe929c7379b)" style="fill: #39568c"/> <path d="M 186.19 324.30 L 188.15 324.76 L 188.02 324.18 L 190.43 325.56 L 187.65 325.73 L 188.03 325.28 L 186.07 324.82 L 186.19 324.30 " clip-path="url(#pe929c7379b)" style="fill: #365d8d"/> <path d="M 194.69 324.30 L 196.74 324.85 L 196.62 324.26 L 198.99 325.72 L 196.21 325.81 L 196.60 325.36 L 194.56 324.82 L 194.69 324.30 " clip-path="url(#pe929c7379b)" style="fill: #32648e"/> <path d="M 203.20 324.30 L 205.31 324.93 L 205.21 324.34 L 207.54 325.86 L 204.76 325.88 L 205.16 325.44 L 203.04 324.81 L 203.20 324.30 " clip-path="url(#pe929c7379b)" style="fill: #306a8e"/> <path d="M 211.70 324.30 L 213.88 325.01 L 213.79 324.42 L 216.08 325.99 L 213.30 325.94 L 213.72 325.51 L 211.53 324.81 L 211.70 324.30 " clip-path="url(#pe929c7379b)" style="fill: #2d718e"/> <path d="M 220.20 324.31 L 222.44 325.08 L 222.36 324.49 L 224.62 326.11 L 221.85 326.00 L 222.27 325.58 L 220.02 324.81 L 220.20 324.31 " clip-path="url(#pe929c7379b)" style="fill: #2a778e"/> <path d="M 228.70 324.31 L 231.00 325.14 L 230.93 324.55 L 233.16 326.21 L 230.38 326.05 L 230.81 325.64 L 228.51 324.81 L 228.70 324.31 " clip-path="url(#pe929c7379b)" style="fill: #287d8e"/> <path d="M 66.93 305.99 L 66.93 299.57 L 66.40 299.83 L 67.20 297.17 L 68.00 299.83 L 67.47 299.57 L 67.47 305.99 L 66.93 305.99 " clip-path="url(#pe929c7379b)" style="fill: #443983"/> <path d="M 75.43 305.96 L 76.10 299.61 L 75.54 299.82 L 76.62 297.26 L 77.13 299.99 L 76.63 299.67 L 75.96 306.02 L 75.43 305.96 " clip-path="url(#pe929c7379b)" style="fill: #46337f"/> <path d="M 83.93 305.93 L 85.39 299.87 L 84.81 300.00 L 86.20 297.60 L 86.36 300.38 L 85.90 299.99 L 84.45 306.05 L 83.93 305.93 " clip-path="url(#pe929c7379b)" style="fill: #472e7c"/> <path d="M 92.44 305.89 L 94.70 300.44 L 94.11 300.49 L 95.87 298.33 L 95.58 301.10 L 95.19 300.65 L 92.93 306.09 L 92.44 305.89 " clip-path="url(#pe929c7379b)" style="fill: #482979"/> <path d="M 100.96 305.84 L 103.86 301.40 L 103.27 301.33 L 105.40 299.54 L 104.61 302.21 L 104.31 301.70 L 101.40 306.14 L 100.96 305.84 " clip-path="url(#pe929c7379b)" style="fill: #482677"/> <path d="M 109.49 305.80 L 112.64 302.65 L 112.08 302.46 L 114.52 301.14 L 113.21 303.59 L 113.02 303.02 L 109.86 306.18 L 109.49 305.80 " clip-path="url(#pe929c7379b)" style="fill: #482576"/> <path d="M 118.03 305.77 L 120.94 303.88 L 120.43 303.57 L 123.10 302.80 L 121.30 304.92 L 121.23 304.32 L 118.32 306.21 L 118.03 305.77 " clip-path="url(#pe929c7379b)" style="fill: #482576"/> <path d="M 126.57 305.74 L 128.95 304.80 L 128.51 304.40 L 131.28 304.16 L 129.10 305.88 L 129.15 305.29 L 126.76 306.24 L 126.57 305.74 " clip-path="url(#pe929c7379b)" style="fill: #482878"/> <path d="M 135.11 305.73 L 137.01 305.33 L 136.64 304.87 L 139.41 305.10 L 136.97 306.43 L 137.12 305.85 L 135.21 306.25 L 135.11 305.73 " clip-path="url(#pe929c7379b)" style="fill: #472c7a"/> <path d="M 143.64 305.72 L 145.30 305.62 L 145.00 305.11 L 147.71 305.74 L 145.10 306.70 L 145.34 306.15 L 143.67 306.26 L 143.64 305.72 " clip-path="url(#pe929c7379b)" style="fill: #46307e"/> <path d="M 152.16 305.72 L 153.82 305.82 L 153.59 305.27 L 156.20 306.21 L 153.50 306.86 L 153.79 306.35 L 152.14 306.26 L 152.16 305.72 " clip-path="url(#pe929c7379b)" style="fill: #453581"/> <path d="M 160.69 305.73 L 162.47 306.00 L 162.29 305.43 L 164.80 306.62 L 162.05 307.01 L 162.39 306.52 L 160.61 306.25 L 160.69 305.73 " clip-path="url(#pe929c7379b)" style="fill: #443b84"/> <path d="M 169.20 305.73 L 171.16 306.18 L 171.02 305.60 L 173.43 306.98 L 170.66 307.16 L 171.04 306.70 L 169.08 306.25 L 169.20 305.73 " clip-path="url(#pe929c7379b)" style="fill: #414287"/> <path d="M 177.71 305.73 L 179.84 306.37 L 179.74 305.78 L 182.06 307.31 L 179.28 307.32 L 179.69 306.88 L 177.56 306.24 L 177.71 305.73 " clip-path="url(#pe929c7379b)" style="fill: #3e4989"/> <path d="M 186.22 305.74 L 188.50 306.55 L 188.43 305.96 L 190.67 307.61 L 187.89 307.47 L 188.32 307.06 L 186.04 306.24 L 186.22 305.74 " clip-path="url(#pe929c7379b)" style="fill: #3c508b"/> <path d="M 194.73 305.74 L 197.14 306.73 L 197.09 306.13 L 199.26 307.88 L 196.49 307.61 L 196.94 307.22 L 194.52 306.24 L 194.73 305.74 " clip-path="url(#pe929c7379b)" style="fill: #39568c"/> <path d="M 203.23 305.75 L 205.75 306.89 L 205.73 306.29 L 207.83 308.12 L 205.07 307.75 L 205.54 307.37 L 203.01 306.23 L 203.23 305.75 " clip-path="url(#pe929c7379b)" style="fill: #365d8d"/> <path d="M 211.73 305.75 L 214.35 307.03 L 214.34 306.44 L 216.38 308.33 L 213.64 307.87 L 214.11 307.51 L 211.50 306.23 L 211.73 305.75 " clip-path="url(#pe929c7379b)" style="fill: #32648e"/> <path d="M 220.23 305.75 L 222.93 307.17 L 222.94 306.57 L 224.92 308.52 L 222.20 307.99 L 222.68 307.64 L 219.99 306.23 L 220.23 305.75 " clip-path="url(#pe929c7379b)" style="fill: #306a8e"/> <path d="M 228.73 305.76 L 231.49 307.29 L 231.52 306.69 L 233.46 308.68 L 230.74 308.09 L 231.23 307.75 L 228.48 306.22 L 228.73 305.76 " clip-path="url(#pe929c7379b)" style="fill: #2d718e"/> <path d="M 66.93 287.42 L 66.93 281.00 L 66.40 281.26 L 67.20 278.60 L 68.00 281.26 L 67.47 281.00 L 67.47 287.42 L 66.93 287.42 " clip-path="url(#pe929c7379b)" style="fill: #404588"/> <path d="M 75.43 287.40 L 75.87 281.01 L 75.32 281.24 L 76.30 278.64 L 76.91 281.35 L 76.40 281.05 L 75.96 287.44 L 75.43 287.40 " clip-path="url(#pe929c7379b)" style="fill: #433e85"/> <path d="M 83.93 287.38 L 84.90 281.12 L 84.33 281.30 L 85.53 278.79 L 85.91 281.54 L 85.43 281.20 L 84.45 287.46 L 83.93 287.38 " clip-path="url(#pe929c7379b)" style="fill: #453781"/> <path d="M 92.43 287.35 L 94.04 281.38 L 93.45 281.50 L 94.92 279.14 L 95.00 281.91 L 94.55 281.52 L 92.94 287.49 L 92.43 287.35 " clip-path="url(#pe929c7379b)" style="fill: #472f7d"/> <path d="M 100.94 287.32 L 103.23 281.91 L 102.63 281.95 L 104.41 279.81 L 104.11 282.57 L 103.72 282.12 L 101.43 287.53 L 100.94 287.32 " clip-path="url(#pe929c7379b)" style="fill: #472a7a"/> <path d="M 109.45 287.28 L 112.35 282.81 L 111.76 282.74 L 113.87 280.94 L 113.10 283.61 L 112.79 283.10 L 109.90 287.57 L 109.45 287.28 " clip-path="url(#pe929c7379b)" style="fill: #482576"/> <path d="M 117.98 287.23 L 121.14 284.08 L 120.57 283.89 L 123.02 282.57 L 121.70 285.02 L 121.51 284.45 L 118.36 287.61 L 117.98 287.23 " clip-path="url(#pe929c7379b)" style="fill: #482374"/> <path d="M 126.53 287.19 L 129.39 285.44 L 128.88 285.13 L 131.57 284.42 L 129.71 286.49 L 129.66 285.90 L 126.80 287.65 L 126.53 287.19 " clip-path="url(#pe929c7379b)" style="fill: #482173"/> <path d="M 135.08 287.17 L 137.27 286.46 L 136.85 286.04 L 139.63 285.98 L 137.34 287.56 L 137.43 286.97 L 135.24 287.67 L 135.08 287.17 " clip-path="url(#pe929c7379b)" style="fill: #482173"/> <path d="M 143.63 287.16 L 145.33 286.99 L 145.01 286.49 L 147.74 287.03 L 145.16 288.08 L 145.38 287.52 L 143.68 287.69 L 143.63 287.16 " clip-path="url(#pe929c7379b)" style="fill: #482475"/> <path d="M 152.17 287.16 L 153.86 287.30 L 153.64 286.75 L 156.23 287.77 L 153.50 288.34 L 153.81 287.83 L 152.13 287.69 L 152.17 287.16 " clip-path="url(#pe929c7379b)" style="fill: #482979"/> <path d="M 160.71 287.16 L 162.67 287.62 L 162.53 287.04 L 164.94 288.43 L 162.17 288.60 L 162.55 288.14 L 160.58 287.68 L 160.71 287.16 " clip-path="url(#pe929c7379b)" style="fill: #472f7d"/> <path d="M 169.23 287.17 L 171.51 287.99 L 171.44 287.39 L 173.68 289.04 L 170.90 288.90 L 171.33 288.49 L 169.05 287.67 L 169.23 287.17 " clip-path="url(#pe929c7379b)" style="fill: #453581"/> <path d="M 177.75 287.18 L 180.30 288.36 L 180.28 287.76 L 182.36 289.60 L 179.61 289.21 L 180.07 288.84 L 177.52 287.66 L 177.75 287.18 " clip-path="url(#pe929c7379b)" style="fill: #443b84"/> <path d="M 186.26 287.19 L 189.01 288.70 L 189.03 288.11 L 190.98 290.09 L 188.26 289.51 L 188.75 289.17 L 186.00 287.65 L 186.26 287.19 " clip-path="url(#pe929c7379b)" style="fill: #414287"/> <path d="M 194.77 287.20 L 197.65 289.01 L 197.71 288.42 L 199.54 290.51 L 196.86 289.77 L 197.37 289.46 L 194.48 287.65 L 194.77 287.20 " clip-path="url(#pe929c7379b)" style="fill: #3e4a89"/> <path d="M 203.27 287.20 L 206.25 289.28 L 206.34 288.69 L 208.07 290.87 L 205.43 290.00 L 205.95 289.72 L 202.97 287.64 L 203.27 287.20 " clip-path="url(#pe929c7379b)" style="fill: #3b518b"/> <path d="M 211.78 287.21 L 214.82 289.51 L 214.93 288.93 L 216.57 291.17 L 213.97 290.20 L 214.50 289.94 L 211.45 287.63 L 211.78 287.21 " clip-path="url(#pe929c7379b)" style="fill: #38598c"/> <path d="M 220.28 287.21 L 223.37 289.72 L 223.50 289.14 L 225.06 291.43 L 222.49 290.38 L 223.03 290.13 L 219.94 287.63 L 220.28 287.21 " clip-path="url(#pe929c7379b)" style="fill: #355f8d"/> <path d="M 228.78 287.22 L 231.90 289.89 L 232.04 289.32 L 233.55 291.66 L 231.00 290.53 L 231.55 290.30 L 228.43 287.62 L 228.78 287.22 " clip-path="url(#pe929c7379b)" style="fill: #31668e"/> <path d="M 66.93 268.85 L 66.93 262.43 L 66.40 262.70 L 67.20 260.03 L 68.00 262.70 L 67.47 262.43 L 67.47 268.85 L 66.93 268.85 " clip-path="url(#pe929c7379b)" style="fill: #3c4f8a"/> <path d="M 75.43 268.84 L 75.70 262.43 L 75.16 262.67 L 76.07 260.05 L 76.75 262.74 L 76.23 262.45 L 75.96 268.86 L 75.43 268.84 " clip-path="url(#pe929c7379b)" style="fill: #3f4788"/> <path d="M 83.93 268.83 L 84.53 262.46 L 83.98 262.68 L 85.02 260.10 L 85.57 262.83 L 85.06 262.52 L 84.46 268.88 L 83.93 268.83 " clip-path="url(#pe929c7379b)" style="fill: #423f85"/> <path d="M 92.42 268.81 L 93.45 262.56 L 92.88 262.74 L 94.10 260.24 L 94.46 263.00 L 93.98 262.65 L 92.95 268.90 L 92.42 268.81 " clip-path="url(#pe929c7379b)" style="fill: #453781"/> <path d="M 100.92 268.79 L 102.48 262.79 L 101.90 262.91 L 103.34 260.53 L 103.45 263.31 L 103.00 262.92 L 101.44 268.92 L 100.92 268.79 " clip-path="url(#pe929c7379b)" style="fill: #472f7d"/> <path d="M 109.43 268.75 L 111.62 263.24 L 111.02 263.29 L 112.75 261.11 L 112.51 263.88 L 112.11 263.43 L 109.92 268.95 L 109.43 268.75 " clip-path="url(#pe929c7379b)" style="fill: #482878"/> <path d="M 117.94 268.71 L 120.77 264.10 L 120.18 264.04 L 122.25 262.19 L 121.54 264.88 L 121.22 264.37 L 118.40 268.99 L 117.94 268.71 " clip-path="url(#pe929c7379b)" style="fill: #482173"/> <path d="M 126.48 268.66 L 129.63 265.51 L 129.07 265.32 L 131.51 264.00 L 130.20 266.45 L 130.01 265.89 L 126.85 269.04 L 126.48 268.66 " clip-path="url(#pe929c7379b)" style="fill: #481b6d"/> <path d="M 135.04 268.62 L 137.73 267.20 L 137.25 266.86 L 139.98 266.33 L 137.99 268.27 L 137.98 267.68 L 135.28 269.09 L 135.04 268.62 " clip-path="url(#pe929c7379b)" style="fill: #48186a"/> <path d="M 143.61 268.59 L 145.41 268.31 L 145.06 267.83 L 147.82 268.21 L 145.31 269.40 L 145.49 268.84 L 143.70 269.12 L 143.61 268.59 " clip-path="url(#pe929c7379b)" style="fill: #48186a"/> <path d="M 152.19 268.59 L 153.95 268.84 L 153.76 268.27 L 156.29 269.43 L 153.54 269.85 L 153.88 269.36 L 152.11 269.12 L 152.19 268.59 " clip-path="url(#pe929c7379b)" style="fill: #481c6e"/> <path d="M 160.74 268.60 L 163.09 269.50 L 163.03 268.91 L 165.23 270.60 L 162.46 270.40 L 162.90 270.00 L 160.55 269.10 L 160.74 268.60 " clip-path="url(#pe929c7379b)" style="fill: #482173"/> <path d="M 169.27 268.62 L 172.08 270.26 L 172.12 269.67 L 174.02 271.70 L 171.32 271.05 L 171.81 270.72 L 169.01 269.08 L 169.27 268.62 " clip-path="url(#pe929c7379b)" style="fill: #482979"/> <path d="M 177.80 268.64 L 180.84 270.94 L 180.95 270.35 L 182.59 272.59 L 179.99 271.63 L 180.52 271.36 L 177.47 269.07 L 177.80 268.64 " clip-path="url(#pe929c7379b)" style="fill: #46307e"/> <path d="M 186.31 268.65 L 189.45 271.48 L 189.60 270.91 L 191.05 273.28 L 188.54 272.09 L 189.09 271.88 L 185.95 269.05 L 186.31 268.65 " clip-path="url(#pe929c7379b)" style="fill: #453882"/> <path d="M 194.82 268.67 L 197.97 271.91 L 198.17 271.34 L 199.45 273.81 L 197.02 272.46 L 197.59 272.28 L 194.43 269.04 L 194.82 268.67 " clip-path="url(#pe929c7379b)" style="fill: #424086"/> <path d="M 203.32 268.68 L 206.45 272.24 L 206.68 271.69 L 207.83 274.22 L 205.48 272.74 L 206.05 272.59 L 202.92 269.03 L 203.32 268.68 " clip-path="url(#pe929c7379b)" style="fill: #3f4889"/> <path d="M 211.82 268.69 L 214.91 272.50 L 215.16 271.96 L 216.21 274.53 L 213.92 272.97 L 214.50 272.84 L 211.41 269.02 L 211.82 268.69 " clip-path="url(#pe929c7379b)" style="fill: #3c508b"/> <path d="M 220.32 268.69 L 223.37 272.72 L 223.63 272.18 L 224.60 274.79 L 222.36 273.15 L 222.94 273.04 L 219.90 269.01 L 220.32 268.69 " clip-path="url(#pe929c7379b)" style="fill: #38598c"/> <path d="M 228.82 268.70 L 231.82 272.89 L 232.10 272.37 L 232.99 275.00 L 230.80 273.29 L 231.38 273.20 L 228.39 269.01 L 228.82 268.70 " clip-path="url(#pe929c7379b)" style="fill: #34608d"/> <path d="M 66.93 250.28 L 66.93 243.86 L 66.40 244.13 L 67.20 241.46 L 68.00 244.13 L 67.47 243.86 L 67.47 250.28 L 66.93 250.28 " clip-path="url(#pe929c7379b)" style="fill: #375a8c"/> <path d="M 75.43 250.28 L 75.57 243.86 L 75.03 244.11 L 75.89 241.47 L 76.63 244.15 L 76.10 243.87 L 75.96 250.29 L 75.43 250.28 " clip-path="url(#pe929c7379b)" style="fill: #3b518b"/> <path d="M 83.92 250.27 L 84.24 243.86 L 83.70 244.10 L 84.63 241.48 L 85.30 244.18 L 84.78 243.89 L 84.46 250.30 L 83.92 250.27 " clip-path="url(#pe929c7379b)" style="fill: #3f4889"/> <path d="M 92.42 250.26 L 92.97 243.89 L 92.42 244.11 L 93.44 241.52 L 94.01 244.25 L 93.50 243.93 L 92.95 250.31 L 92.42 250.26 " clip-path="url(#pe929c7379b)" style="fill: #423f85"/> <path d="M 100.92 250.25 L 101.78 243.95 L 101.21 244.14 L 102.36 241.61 L 102.80 244.36 L 102.30 244.02 L 101.44 250.32 L 100.92 250.25 " clip-path="url(#pe929c7379b)" style="fill: #453581"/> <path d="M 109.41 250.23 L 110.69 244.09 L 110.12 244.24 L 111.44 241.79 L 111.68 244.56 L 111.22 244.19 L 109.94 250.34 L 109.41 250.23 " clip-path="url(#pe929c7379b)" style="fill: #472c7a"/> <path d="M 117.92 250.20 L 119.78 244.40 L 119.19 244.50 L 120.77 242.20 L 120.71 244.98 L 120.29 244.57 L 118.42 250.37 L 117.92 250.20 " clip-path="url(#pe929c7379b)" style="fill: #482173"/> <path d="M 126.43 250.16 L 129.05 245.17 L 128.45 245.16 L 130.40 243.17 L 129.87 245.90 L 129.52 245.42 L 126.90 250.41 L 126.43 250.16 " clip-path="url(#pe929c7379b)" style="fill: #48186a"/> <path d="M 134.97 250.10 L 138.13 246.94 L 137.56 246.75 L 140.01 245.43 L 138.69 247.88 L 138.50 247.32 L 135.35 250.47 L 134.97 250.10 " clip-path="url(#pe929c7379b)" style="fill: #471063"/> <path d="M 143.58 250.03 L 145.70 249.40 L 145.29 248.97 L 148.07 248.98 L 145.75 250.50 L 145.85 249.91 L 143.73 250.54 L 143.58 250.03 " clip-path="url(#pe929c7379b)" style="fill: #460b5e"/> <path d="M 152.22 250.03 L 154.26 250.57 L 154.14 249.99 L 156.51 251.45 L 153.73 251.53 L 154.13 251.09 L 152.08 250.54 L 152.22 250.03 " clip-path="url(#pe929c7379b)" style="fill: #470e61"/> <path d="M 160.80 250.07 L 163.82 252.26 L 163.92 251.68 L 165.60 253.89 L 162.98 252.97 L 163.51 252.69 L 160.49 250.50 L 160.80 250.07 " clip-path="url(#pe929c7379b)" style="fill: #481668"/> <path d="M 169.34 250.11 L 172.48 253.59 L 172.70 253.04 L 173.88 255.55 L 171.51 254.11 L 172.08 253.95 L 168.94 250.46 L 169.34 250.11 " clip-path="url(#pe929c7379b)" style="fill: #481f70"/> <path d="M 177.85 250.13 L 180.83 254.40 L 181.11 253.88 L 181.98 256.52 L 179.80 254.79 L 180.39 254.70 L 177.42 250.44 L 177.85 250.13 " clip-path="url(#pe929c7379b)" style="fill: #482878"/> <path d="M 186.36 250.15 L 189.13 254.89 L 189.45 254.39 L 190.10 257.10 L 188.07 255.20 L 188.67 255.16 L 185.90 250.42 L 186.36 250.15 " clip-path="url(#pe929c7379b)" style="fill: #46327e"/> <path d="M 194.86 250.16 L 197.44 255.21 L 197.80 254.73 L 198.30 257.47 L 196.37 255.46 L 196.97 255.45 L 194.39 250.41 L 194.86 250.16 " clip-path="url(#pe929c7379b)" style="fill: #443b84"/> <path d="M 203.36 250.17 L 205.79 255.43 L 206.16 254.96 L 206.55 257.72 L 204.71 255.63 L 205.30 255.65 L 202.88 250.40 L 203.36 250.17 " clip-path="url(#pe929c7379b)" style="fill: #404588"/> <path d="M 211.86 250.18 L 214.16 255.58 L 214.54 255.13 L 214.85 257.90 L 213.07 255.76 L 213.67 255.79 L 211.37 250.39 L 211.86 250.18 " clip-path="url(#pe929c7379b)" style="fill: #3d4e8a"/> <path d="M 220.36 250.19 L 222.55 255.70 L 222.94 255.26 L 223.18 258.03 L 221.46 255.85 L 222.05 255.90 L 219.86 250.38 L 220.36 250.19 " clip-path="url(#pe929c7379b)" style="fill: #39568c"/> <path d="M 228.85 250.19 L 230.96 255.79 L 231.36 255.36 L 231.55 258.13 L 229.86 255.92 L 230.46 255.98 L 228.36 250.38 L 228.85 250.19 " clip-path="url(#pe929c7379b)" style="fill: #355f8d"/> <path d="M 66.93 231.72 L 66.93 225.29 L 66.40 225.56 L 67.20 222.90 L 68.00 225.56 L 67.47 225.29 L 67.47 231.72 L 66.93 231.72 " clip-path="url(#pe929c7379b)" style="fill: #32648e"/> <path d="M 75.43 231.71 L 75.47 225.29 L 74.94 225.55 L 75.75 222.90 L 76.53 225.56 L 76.00 225.29 L 75.96 231.72 L 75.43 231.71 " clip-path="url(#pe929c7379b)" style="fill: #375b8d"/> <path d="M 83.92 231.71 L 84.02 225.29 L 83.48 225.55 L 84.32 222.90 L 85.08 225.57 L 84.55 225.30 L 84.46 231.72 L 83.92 231.71 " clip-path="url(#pe929c7379b)" style="fill: #3c508b"/> <path d="M 92.42 231.71 L 92.58 225.29 L 92.04 225.54 L 92.91 222.90 L 93.64 225.58 L 93.12 225.30 L 92.95 231.72 L 92.42 231.71 " clip-path="url(#pe929c7379b)" style="fill: #404688"/> <path d="M 100.91 231.71 L 101.17 225.29 L 100.63 225.54 L 101.54 222.91 L 102.23 225.60 L 101.71 225.31 L 101.45 231.73 L 100.91 231.71 " clip-path="url(#pe929c7379b)" style="fill: #443b84"/> <path d="M 109.41 231.70 L 109.80 225.30 L 109.26 225.53 L 110.22 222.93 L 110.85 225.63 L 110.34 225.33 L 109.94 231.73 L 109.41 231.70 " clip-path="url(#pe929c7379b)" style="fill: #46307e"/> <path d="M 117.91 231.69 L 118.51 225.33 L 117.96 225.54 L 119.00 222.97 L 119.55 225.69 L 119.04 225.38 L 118.44 231.74 L 117.91 231.69 " clip-path="url(#pe929c7379b)" style="fill: #482475"/> <path d="M 126.40 231.68 L 127.38 225.41 L 126.81 225.59 L 128.01 223.08 L 128.39 225.84 L 127.90 225.49 L 126.93 231.76 L 126.40 231.68 " clip-path="url(#pe929c7379b)" style="fill: #48186a"/> <path d="M 134.90 231.64 L 136.65 225.76 L 136.06 225.86 L 137.58 223.53 L 137.59 226.31 L 137.16 225.91 L 135.42 231.79 L 134.90 231.64 " clip-path="url(#pe929c7379b)" style="fill: #460b5e"/> <path d="M 143.47 231.53 L 146.62 228.37 L 146.06 228.18 L 148.50 226.87 L 147.19 229.31 L 147.00 228.75 L 143.84 231.90 L 143.47 231.53 " clip-path="url(#pe929c7379b)" style="fill: #440154"/> <path d="M 152.33 231.52 L 155.47 234.34 L 155.62 233.77 L 157.07 236.14 L 154.56 234.96 L 155.11 234.74 L 151.97 231.91 L 152.33 231.52 " clip-path="url(#pe929c7379b)" style="fill: #440154"/> <path d="M 160.89 231.62 L 163.12 237.09 L 163.52 236.64 L 163.78 239.41 L 162.04 237.25 L 162.63 237.29 L 160.40 231.82 L 160.89 231.62 " clip-path="url(#pe929c7379b)" style="fill: #470d60"/> <path d="M 169.40 231.65 L 170.99 237.63 L 171.44 237.23 L 171.35 240.01 L 169.89 237.64 L 170.48 237.76 L 168.88 231.78 L 169.40 231.65 " clip-path="url(#pe929c7379b)" style="fill: #481a6c"/> <path d="M 177.90 231.66 L 179.17 237.81 L 179.63 237.44 L 179.39 240.21 L 178.07 237.77 L 178.64 237.92 L 177.37 231.77 L 177.90 231.66 " clip-path="url(#pe929c7379b)" style="fill: #482576"/> <path d="M 186.39 231.67 L 187.47 237.90 L 187.95 237.55 L 187.62 240.31 L 186.37 237.82 L 186.94 237.99 L 185.87 231.76 L 186.39 231.67 " clip-path="url(#pe929c7379b)" style="fill: #46307e"/> <path d="M 194.89 231.68 L 195.84 237.95 L 196.33 237.61 L 195.93 240.36 L 194.75 237.85 L 195.31 238.03 L 194.36 231.76 L 194.89 231.68 " clip-path="url(#pe929c7379b)" style="fill: #443b84"/> <path d="M 203.38 231.68 L 204.25 237.98 L 204.74 237.64 L 204.31 240.39 L 203.15 237.86 L 203.72 238.05 L 202.86 231.75 L 203.38 231.68 " clip-path="url(#pe929c7379b)" style="fill: #3f4788"/> <path d="M 211.88 231.68 L 212.68 238.00 L 213.17 237.67 L 212.71 240.41 L 211.58 237.87 L 212.15 238.07 L 211.35 231.75 L 211.88 231.68 " clip-path="url(#pe929c7379b)" style="fill: #3b518b"/> <path d="M 220.37 231.68 L 221.12 238.02 L 221.62 237.69 L 221.14 240.43 L 220.03 237.88 L 220.59 238.08 L 219.85 231.75 L 220.37 231.68 " clip-path="url(#pe929c7379b)" style="fill: #375b8d"/> <path d="M 228.87 231.69 L 229.57 238.03 L 230.07 237.70 L 229.57 240.44 L 228.49 237.88 L 229.05 238.09 L 228.34 231.75 L 228.87 231.69 " clip-path="url(#pe929c7379b)" style="fill: #32648e"/> <path d="M 66.93 213.15 L 66.93 206.72 L 66.40 206.99 L 67.20 204.33 L 68.00 206.99 L 67.47 206.72 L 67.47 213.15 L 66.93 213.15 " clip-path="url(#pe929c7379b)" style="fill: #2e6e8e"/> <path d="M 75.43 213.15 L 75.39 206.73 L 74.86 207.00 L 75.64 204.33 L 76.46 206.99 L 75.92 206.72 L 75.96 213.15 L 75.43 213.15 " clip-path="url(#pe929c7379b)" style="fill: #33638d"/> <path d="M 83.92 213.15 L 83.84 206.73 L 83.31 207.00 L 84.07 204.33 L 84.91 206.98 L 84.37 206.72 L 84.46 213.14 L 83.92 213.15 " clip-path="url(#pe929c7379b)" style="fill: #38598c"/> <path d="M 92.42 213.15 L 92.27 206.73 L 91.74 207.01 L 92.48 204.33 L 93.34 206.98 L 92.80 206.72 L 92.95 213.14 L 92.42 213.15 " clip-path="url(#pe929c7379b)" style="fill: #3d4e8a"/> <path d="M 100.91 213.16 L 100.68 206.74 L 100.16 207.03 L 100.86 204.34 L 101.76 206.97 L 101.21 206.72 L 101.45 213.14 L 100.91 213.16 " clip-path="url(#pe929c7379b)" style="fill: #414287"/> <path d="M 109.41 213.16 L 109.05 206.76 L 108.54 207.06 L 109.19 204.35 L 110.13 206.97 L 109.59 206.73 L 109.94 213.13 L 109.41 213.16 " clip-path="url(#pe929c7379b)" style="fill: #453581"/> <path d="M 117.90 213.17 L 117.36 206.80 L 116.85 207.11 L 117.42 204.39 L 118.44 206.97 L 117.89 206.75 L 118.44 213.12 L 117.90 213.17 " clip-path="url(#pe929c7379b)" style="fill: #482979"/> <path d="M 126.40 213.18 L 125.52 206.89 L 125.03 207.23 L 125.45 204.48 L 126.61 207.01 L 126.05 206.82 L 126.93 213.11 L 126.40 213.18 " clip-path="url(#pe929c7379b)" style="fill: #481c6e"/> <path d="M 134.90 213.22 L 133.31 207.24 L 132.86 207.63 L 132.95 204.85 L 134.41 207.22 L 133.82 207.10 L 135.42 213.08 L 134.90 213.22 " clip-path="url(#pe929c7379b)" style="fill: #470e61"/> <path d="M 143.46 213.33 L 140.32 209.84 L 140.10 210.39 L 138.91 207.88 L 141.29 209.32 L 140.71 209.48 L 143.85 212.97 L 143.46 213.33 " clip-path="url(#pe929c7379b)" style="fill: #440154"/> <path d="M 152.34 213.34 L 149.18 216.49 L 149.75 216.68 L 147.30 218.00 L 148.62 215.55 L 148.81 216.11 L 151.96 212.96 L 152.34 213.34 " clip-path="url(#pe929c7379b)" style="fill: #440154"/> <path d="M 160.90 213.24 L 158.83 218.87 L 159.42 218.81 L 157.75 221.03 L 157.92 218.26 L 158.33 218.69 L 160.40 213.06 L 160.90 213.24 " clip-path="url(#pe929c7379b)" style="fill: #470e61"/> <path d="M 169.40 213.21 L 167.95 219.27 L 168.53 219.13 L 167.13 221.54 L 166.97 218.76 L 167.43 219.14 L 168.88 213.09 L 169.40 213.21 " clip-path="url(#pe929c7379b)" style="fill: #481c6e"/> <path d="M 177.90 213.20 L 176.75 219.40 L 177.32 219.23 L 176.05 221.70 L 175.75 218.94 L 176.22 219.30 L 177.37 213.10 L 177.90 213.20 " clip-path="url(#pe929c7379b)" style="fill: #472a7a"/> <path d="M 186.39 213.19 L 185.42 219.45 L 185.99 219.27 L 184.79 221.78 L 184.41 219.03 L 184.89 219.37 L 185.87 213.11 L 186.39 213.19 " clip-path="url(#pe929c7379b)" style="fill: #453781"/> <path d="M 194.89 213.18 L 194.03 219.48 L 194.59 219.29 L 193.44 221.82 L 193.01 219.08 L 193.50 219.41 L 194.36 213.11 L 194.89 213.18 " clip-path="url(#pe929c7379b)" style="fill: #414287"/> <path d="M 203.38 213.18 L 202.61 219.50 L 203.17 219.30 L 202.05 221.85 L 201.58 219.11 L 202.08 219.44 L 202.86 213.12 L 203.38 213.18 " clip-path="url(#pe929c7379b)" style="fill: #3d4e8a"/> <path d="M 211.88 213.18 L 211.16 219.52 L 211.72 219.31 L 210.63 221.87 L 210.13 219.13 L 210.63 219.46 L 211.35 213.12 L 211.88 213.18 " clip-path="url(#pe929c7379b)" style="fill: #375a8c"/> <path d="M 220.38 213.18 L 219.70 219.52 L 220.26 219.32 L 219.19 221.88 L 218.67 219.15 L 219.17 219.47 L 219.85 213.12 L 220.38 213.18 " clip-path="url(#pe929c7379b)" style="fill: #32648e"/> <path d="M 228.87 213.17 L 228.23 219.53 L 228.79 219.32 L 227.73 221.89 L 227.20 219.16 L 227.70 219.48 L 228.34 213.12 L 228.87 213.17 " clip-path="url(#pe929c7379b)" style="fill: #2e6e8e"/> <path d="M 66.93 194.58 L 66.93 188.16 L 66.40 188.42 L 67.20 185.76 L 68.00 188.42 L 67.47 188.16 L 67.47 194.58 L 66.93 194.58 " clip-path="url(#pe929c7379b)" style="fill: #2a768e"/> <path d="M 75.43 194.58 L 75.33 188.16 L 74.80 188.44 L 75.55 185.76 L 76.40 188.41 L 75.86 188.15 L 75.96 194.57 L 75.43 194.58 " clip-path="url(#pe929c7379b)" style="fill: #2f6c8e"/> <path d="M 83.92 194.59 L 83.69 188.17 L 83.17 188.46 L 83.87 185.77 L 84.77 188.40 L 84.22 188.16 L 84.46 194.57 L 83.92 194.59 " clip-path="url(#pe929c7379b)" style="fill: #34618d"/> <path d="M 92.42 194.60 L 92.02 188.20 L 91.50 188.50 L 92.13 185.79 L 93.10 188.40 L 92.55 188.17 L 92.95 194.56 L 92.42 194.60 " clip-path="url(#pe929c7379b)" style="fill: #39558c"/> <path d="M 100.92 194.61 L 100.28 188.25 L 99.78 188.57 L 100.31 185.84 L 101.37 188.41 L 100.81 188.20 L 101.45 194.55 L 100.92 194.61 " clip-path="url(#pe929c7379b)" style="fill: #3f4889"/> <path d="M 109.41 194.62 L 108.46 188.35 L 107.97 188.69 L 108.37 185.94 L 109.55 188.45 L 108.99 188.27 L 109.94 194.54 L 109.41 194.62 " clip-path="url(#pe929c7379b)" style="fill: #443b84"/> <path d="M 117.91 194.64 L 116.49 188.56 L 116.03 188.94 L 116.20 186.17 L 117.59 188.58 L 117.01 188.44 L 118.43 194.52 L 117.91 194.64 " clip-path="url(#pe929c7379b)" style="fill: #472f7d"/> <path d="M 126.42 194.67 L 124.29 189.10 L 123.89 189.54 L 123.68 186.76 L 125.38 188.97 L 124.79 188.91 L 126.91 194.48 L 126.42 194.67 " clip-path="url(#pe929c7379b)" style="fill: #482173"/> <path d="M 134.94 194.74 L 131.93 190.59 L 131.66 191.12 L 130.74 188.50 L 132.95 190.18 L 132.36 190.28 L 135.38 194.42 L 134.94 194.74 " clip-path="url(#pe929c7379b)" style="fill: #481668"/> <path d="M 143.55 194.83 L 141.14 193.84 L 141.19 194.44 L 139.02 192.69 L 141.79 192.96 L 141.34 193.35 L 143.76 194.33 L 143.55 194.83 " clip-path="url(#pe929c7379b)" style="fill: #470d60"/> <path d="M 152.24 194.83 L 149.93 195.68 L 150.37 196.08 L 147.59 196.25 L 149.82 194.58 L 149.75 195.18 L 152.06 194.33 L 152.24 194.83 " clip-path="url(#pe929c7379b)" style="fill: #470e61"/> <path d="M 160.83 194.77 L 157.68 197.92 L 158.24 198.11 L 155.80 199.43 L 157.11 196.98 L 157.30 197.55 L 160.46 194.39 L 160.83 194.77 " clip-path="url(#pe929c7379b)" style="fill: #481a6c"/> <path d="M 169.36 194.73 L 166.46 199.17 L 167.05 199.23 L 164.92 201.02 L 165.71 198.36 L 166.01 198.87 L 168.92 194.43 L 169.36 194.73 " clip-path="url(#pe929c7379b)" style="fill: #482677"/> <path d="M 177.87 194.70 L 175.31 199.77 L 175.90 199.77 L 173.99 201.78 L 174.48 199.05 L 174.83 199.53 L 177.40 194.46 L 177.87 194.70 " clip-path="url(#pe929c7379b)" style="fill: #46337f"/> <path d="M 186.38 194.68 L 184.08 200.09 L 184.68 200.05 L 182.90 202.19 L 183.20 199.43 L 183.59 199.88 L 185.89 194.48 L 186.38 194.68 " clip-path="url(#pe929c7379b)" style="fill: #424086"/> <path d="M 194.87 194.67 L 192.79 200.29 L 193.38 200.22 L 191.70 202.44 L 191.88 199.66 L 192.29 200.10 L 194.38 194.49 L 194.87 194.67 " clip-path="url(#pe929c7379b)" style="fill: #3d4d8a"/> <path d="M 203.37 194.66 L 201.44 200.41 L 202.03 200.33 L 200.43 202.60 L 200.52 199.82 L 200.94 200.24 L 202.87 194.49 L 203.37 194.66 " clip-path="url(#pe929c7379b)" style="fill: #375a8c"/> <path d="M 211.87 194.66 L 210.06 200.50 L 210.65 200.40 L 209.10 202.71 L 209.13 199.93 L 209.56 200.34 L 211.36 194.50 L 211.87 194.66 " clip-path="url(#pe929c7379b)" style="fill: #32658e"/> <path d="M 220.37 194.65 L 218.66 200.56 L 219.25 200.45 L 217.74 202.79 L 217.71 200.01 L 218.15 200.41 L 219.85 194.51 L 220.37 194.65 " clip-path="url(#pe929c7379b)" style="fill: #2d708e"/> <path d="M 228.86 194.65 L 227.24 200.61 L 227.82 200.49 L 226.35 202.85 L 226.28 200.07 L 226.72 200.47 L 228.35 194.51 L 228.86 194.65 " clip-path="url(#pe929c7379b)" style="fill: #297a8e"/> <path d="M 66.93 176.01 L 66.93 169.59 L 66.40 169.85 L 67.20 167.19 L 68.00 169.85 L 67.47 169.59 L 67.47 176.01 L 66.93 176.01 " clip-path="url(#pe929c7379b)" style="fill: #27808e"/> <path d="M 75.43 176.02 L 75.27 169.60 L 74.75 169.88 L 75.48 167.20 L 76.34 169.84 L 75.80 169.59 L 75.96 176.00 L 75.43 176.02 " clip-path="url(#pe929c7379b)" style="fill: #2b748e"/> <path d="M 83.92 176.03 L 83.57 169.62 L 83.05 169.92 L 83.70 167.22 L 84.65 169.83 L 84.10 169.59 L 84.46 176.00 L 83.92 176.03 " clip-path="url(#pe929c7379b)" style="fill: #30698e"/> <path d="M 92.42 176.04 L 91.81 169.67 L 91.30 169.99 L 91.84 167.26 L 92.89 169.84 L 92.34 169.62 L 92.95 175.99 L 92.42 176.04 " clip-path="url(#pe929c7379b)" style="fill: #365d8d"/> <path d="M 100.92 176.05 L 99.97 169.78 L 99.48 170.12 L 99.87 167.37 L 101.06 169.88 L 100.49 169.70 L 101.44 175.97 L 100.92 176.05 " clip-path="url(#pe929c7379b)" style="fill: #3c508b"/> <path d="M 109.42 176.07 L 108.01 169.99 L 107.55 170.37 L 107.73 167.59 L 109.11 170.01 L 108.53 169.87 L 109.93 175.95 L 109.42 176.07 " clip-path="url(#pe929c7379b)" style="fill: #414287"/> <path d="M 117.92 176.10 L 115.89 170.43 L 115.48 170.86 L 115.34 168.08 L 116.99 170.32 L 116.40 170.25 L 118.42 175.92 L 117.92 176.10 " clip-path="url(#pe929c7379b)" style="fill: #453581"/> <path d="M 126.44 176.15 L 123.67 171.40 L 123.34 171.90 L 122.69 169.20 L 124.72 171.10 L 124.13 171.14 L 126.90 175.88 L 126.44 176.15 " clip-path="url(#pe929c7379b)" style="fill: #482979"/> <path d="M 134.98 176.21 L 131.84 173.38 L 131.69 173.96 L 130.24 171.58 L 132.75 172.77 L 132.20 172.99 L 135.34 175.81 L 134.98 176.21 " clip-path="url(#pe929c7379b)" style="fill: #481f70"/> <path d="M 143.59 176.27 L 141.54 175.72 L 141.66 176.31 L 139.29 174.85 L 142.07 174.76 L 141.68 175.21 L 143.72 175.75 L 143.59 176.27 " clip-path="url(#pe929c7379b)" style="fill: #481a6c"/> <path d="M 152.21 176.27 L 150.23 176.74 L 150.62 177.20 L 147.84 177.04 L 150.24 175.65 L 150.11 176.23 L 152.09 175.75 L 152.21 176.27 " clip-path="url(#pe929c7379b)" style="fill: #481c6e"/> <path d="M 160.79 176.23 L 157.87 178.15 L 158.38 178.45 L 155.71 179.24 L 157.51 177.11 L 157.57 177.70 L 160.50 175.79 L 160.79 176.23 " clip-path="url(#pe929c7379b)" style="fill: #482677"/> <path d="M 169.33 176.20 L 166.17 179.35 L 166.74 179.54 L 164.29 180.86 L 165.61 178.41 L 165.80 178.98 L 168.95 175.82 L 169.33 176.20 " clip-path="url(#pe929c7379b)" style="fill: #46337f"/> <path d="M 177.85 176.17 L 174.78 180.13 L 175.37 180.25 L 173.11 181.86 L 174.10 179.27 L 174.36 179.80 L 177.42 175.85 L 177.85 176.17 " clip-path="url(#pe929c7379b)" style="fill: #424086"/> <path d="M 186.35 176.16 L 183.46 180.62 L 184.05 180.69 L 181.93 182.49 L 182.71 179.82 L 183.01 180.33 L 185.91 175.87 L 186.35 176.16 " clip-path="url(#pe929c7379b)" style="fill: #3d4d8a"/> <path d="M 194.86 176.14 L 192.13 180.95 L 192.72 180.98 L 190.71 182.90 L 191.33 180.19 L 191.66 180.68 L 194.39 175.88 L 194.86 176.14 " clip-path="url(#pe929c7379b)" style="fill: #375a8c"/> <path d="M 203.36 176.13 L 200.77 181.17 L 201.37 181.18 L 199.44 183.18 L 199.95 180.45 L 200.30 180.93 L 202.88 175.89 L 203.36 176.13 " clip-path="url(#pe929c7379b)" style="fill: #31668e"/> <path d="M 211.86 176.12 L 209.40 181.34 L 209.99 181.32 L 208.13 183.39 L 208.55 180.64 L 208.91 181.11 L 211.37 175.90 L 211.86 176.12 " clip-path="url(#pe929c7379b)" style="fill: #2c718e"/> <path d="M 220.35 176.12 L 218.00 181.46 L 218.59 181.43 L 216.79 183.54 L 217.13 180.78 L 217.51 181.24 L 219.87 175.90 L 220.35 176.12 " clip-path="url(#pe929c7379b)" style="fill: #277e8e"/> <path d="M 228.85 176.11 L 226.59 181.55 L 227.18 181.51 L 225.42 183.66 L 225.70 180.90 L 226.09 181.35 L 228.36 175.91 L 228.85 176.11 " clip-path="url(#pe929c7379b)" style="fill: #23898e"/> <path d="M 66.93 157.44 L 66.93 151.02 L 66.40 151.29 L 67.20 148.62 L 68.00 151.29 L 67.47 151.02 L 67.47 157.44 L 66.93 157.44 " clip-path="url(#pe929c7379b)" style="fill: #23898e"/> <path d="M 75.43 157.45 L 75.23 151.03 L 74.70 151.32 L 75.42 148.63 L 76.30 151.27 L 75.76 151.02 L 75.96 157.43 L 75.43 157.45 " clip-path="url(#pe929c7379b)" style="fill: #287d8e"/> <path d="M 83.92 157.46 L 83.47 151.07 L 82.95 151.38 L 83.56 148.66 L 84.55 151.26 L 84.00 151.03 L 84.46 157.42 L 83.92 157.46 " clip-path="url(#pe929c7379b)" style="fill: #2d708e"/> <path d="M 92.42 157.48 L 91.64 151.15 L 91.14 151.48 L 91.60 148.74 L 92.73 151.29 L 92.16 151.09 L 92.95 157.41 L 92.42 157.48 " clip-path="url(#pe929c7379b)" style="fill: #32648e"/> <path d="M 100.92 157.49 L 99.71 151.32 L 99.24 151.68 L 99.51 148.91 L 100.81 151.37 L 100.23 151.22 L 101.44 157.39 L 100.92 157.49 " clip-path="url(#pe929c7379b)" style="fill: #39568c"/> <path d="M 109.42 157.52 L 107.66 151.64 L 107.23 152.05 L 107.23 149.27 L 108.76 151.59 L 108.17 151.49 L 109.93 157.37 L 109.42 157.52 " clip-path="url(#pe929c7379b)" style="fill: #3e4989"/> <path d="M 117.93 157.55 L 115.50 152.30 L 115.13 152.76 L 114.74 150.01 L 116.58 152.09 L 115.99 152.08 L 118.41 157.33 L 117.93 157.55 " clip-path="url(#pe929c7379b)" style="fill: #443b84"/> <path d="M 126.45 157.60 L 123.41 153.57 L 123.15 154.10 L 122.18 151.49 L 124.42 153.14 L 123.84 153.25 L 126.88 157.28 L 126.45 157.60 " clip-path="url(#pe929c7379b)" style="fill: #46307e"/> <path d="M 135.01 157.66 L 132.03 155.58 L 131.94 156.17 L 130.21 154.00 L 132.85 154.86 L 132.33 155.15 L 135.31 157.22 L 135.01 157.66 " clip-path="url(#pe929c7379b)" style="fill: #482878"/> <path d="M 143.60 157.70 L 141.70 157.31 L 141.86 157.89 L 139.41 156.57 L 142.18 156.32 L 141.81 156.79 L 143.71 157.18 L 143.60 157.70 " clip-path="url(#pe929c7379b)" style="fill: #482576"/> <path d="M 152.20 157.70 L 150.35 158.05 L 150.70 158.52 L 147.94 158.22 L 150.41 156.95 L 150.25 157.52 L 152.10 157.18 L 152.20 157.70 " clip-path="url(#pe929c7379b)" style="fill: #472a7a"/> <path d="M 160.77 157.68 L 158.11 159.02 L 158.59 159.38 L 155.85 159.87 L 157.87 157.95 L 157.87 158.55 L 160.52 157.20 L 160.77 157.68 " clip-path="url(#pe929c7379b)" style="fill: #46337f"/> <path d="M 169.30 157.65 L 166.24 160.02 L 166.78 160.28 L 164.18 161.28 L 165.80 159.02 L 165.91 159.60 L 168.98 157.23 L 169.30 157.65 " clip-path="url(#pe929c7379b)" style="fill: #424086"/> <path d="M 177.82 157.63 L 174.67 160.79 L 175.23 160.97 L 172.79 162.29 L 174.10 159.84 L 174.29 160.41 L 177.45 157.25 L 177.82 157.63 " clip-path="url(#pe929c7379b)" style="fill: #3d4d8a"/> <path d="M 186.33 157.61 L 183.22 161.33 L 183.80 161.46 L 181.48 162.99 L 182.58 160.44 L 182.82 160.98 L 185.93 157.27 L 186.33 157.61 " clip-path="url(#pe929c7379b)" style="fill: #375a8c"/> <path d="M 194.84 157.60 L 191.82 161.71 L 192.41 161.81 L 190.19 163.49 L 191.12 160.87 L 191.39 161.40 L 194.41 157.28 L 194.84 157.60 " clip-path="url(#pe929c7379b)" style="fill: #31678e"/> <path d="M 203.34 157.59 L 200.42 162.00 L 201.01 162.07 L 198.88 163.85 L 199.68 161.18 L 199.98 161.70 L 202.90 157.30 L 203.34 157.59 " clip-path="url(#pe929c7379b)" style="fill: #2c738e"/> <path d="M 211.84 157.58 L 209.02 162.21 L 209.61 162.26 L 207.54 164.11 L 208.25 161.43 L 208.56 161.93 L 211.39 157.30 L 211.84 157.58 " clip-path="url(#pe929c7379b)" style="fill: #27808e"/> <path d="M 220.34 157.57 L 217.61 162.37 L 218.20 162.40 L 216.19 164.32 L 216.81 161.61 L 217.14 162.11 L 219.88 157.31 L 220.34 157.57 " clip-path="url(#pe929c7379b)" style="fill: #228d8d"/> <path d="M 228.84 157.57 L 226.18 162.50 L 226.78 162.52 L 224.81 164.48 L 225.37 161.76 L 225.72 162.25 L 228.37 157.32 L 228.84 157.57 " clip-path="url(#pe929c7379b)" style="fill: #1f998a"/> <path d="M 66.93 138.87 L 66.93 132.45 L 66.40 132.72 L 67.20 130.05 L 68.00 132.72 L 67.47 132.45 L 67.47 138.87 L 66.93 138.87 " clip-path="url(#pe929c7379b)" style="fill: #20928c"/> <path d="M 75.43 138.88 L 75.19 132.47 L 74.66 132.76 L 75.36 130.07 L 76.26 132.70 L 75.72 132.45 L 75.96 138.86 L 75.43 138.88 " clip-path="url(#pe929c7379b)" style="fill: #25848e"/> <path d="M 83.92 138.90 L 83.38 132.52 L 82.87 132.83 L 83.44 130.11 L 84.46 132.70 L 83.91 132.48 L 84.46 138.85 L 83.92 138.90 " clip-path="url(#pe929c7379b)" style="fill: #2a778e"/> <path d="M 92.42 138.91 L 91.49 132.63 L 91.00 132.98 L 91.40 130.22 L 92.58 132.74 L 92.02 132.56 L 92.95 138.83 L 92.42 138.91 " clip-path="url(#pe929c7379b)" style="fill: #2f6b8e"/> <path d="M 100.92 138.93 L 99.50 132.86 L 99.04 133.24 L 99.21 130.46 L 100.60 132.87 L 100.02 132.74 L 101.44 138.81 L 100.92 138.93 " clip-path="url(#pe929c7379b)" style="fill: #365d8d"/> <path d="M 109.42 138.96 L 107.40 133.29 L 106.99 133.72 L 106.84 130.95 L 108.49 133.19 L 107.90 133.12 L 109.93 138.78 L 109.42 138.96 " clip-path="url(#pe929c7379b)" style="fill: #3c508b"/> <path d="M 117.94 139.00 L 115.25 134.12 L 114.91 134.61 L 114.33 131.90 L 116.31 133.84 L 115.72 133.87 L 118.40 138.75 L 117.94 139.00 " clip-path="url(#pe929c7379b)" style="fill: #414287"/> <path d="M 126.47 139.05 L 123.33 135.56 L 123.11 136.12 L 121.92 133.60 L 124.30 135.05 L 123.72 135.21 L 126.86 138.70 L 126.47 139.05 " clip-path="url(#pe929c7379b)" style="fill: #453882"/> <path d="M 135.03 139.10 L 132.22 137.47 L 132.18 138.06 L 130.28 136.03 L 132.98 136.68 L 132.49 137.01 L 135.29 138.64 L 135.03 139.10 " clip-path="url(#pe929c7379b)" style="fill: #46327e"/> <path d="M 143.61 139.14 L 141.78 138.82 L 141.96 139.39 L 139.47 138.15 L 142.23 137.82 L 141.87 138.30 L 143.70 138.61 L 143.61 139.14 " clip-path="url(#pe929c7379b)" style="fill: #46307e"/> <path d="M 152.19 139.14 L 150.40 139.42 L 150.74 139.90 L 147.99 139.52 L 150.50 138.32 L 150.32 138.89 L 152.11 138.61 L 152.19 139.14 " clip-path="url(#pe929c7379b)" style="fill: #453781"/> <path d="M 160.75 139.12 L 158.29 140.16 L 158.75 140.55 L 155.98 140.85 L 158.12 139.08 L 158.08 139.67 L 160.54 138.63 L 160.75 139.12 " clip-path="url(#pe929c7379b)" style="fill: #424086"/> <path d="M 169.29 139.10 L 166.37 140.99 L 166.88 141.29 L 164.21 142.07 L 166.01 139.95 L 166.08 140.54 L 169.00 138.65 L 169.29 139.10 " clip-path="url(#pe929c7379b)" style="fill: #3d4d8a"/> <path d="M 177.81 139.08 L 174.70 141.68 L 175.24 141.92 L 172.69 143.02 L 174.22 140.70 L 174.35 141.27 L 177.46 138.67 L 177.81 139.08 " clip-path="url(#pe929c7379b)" style="fill: #375a8c"/> <path d="M 186.32 139.06 L 183.16 142.22 L 183.73 142.41 L 181.28 143.72 L 182.60 141.28 L 182.79 141.84 L 185.94 138.69 L 186.32 139.06 " clip-path="url(#pe929c7379b)" style="fill: #31688e"/> <path d="M 194.83 139.05 L 191.69 142.62 L 192.27 142.77 L 189.91 144.25 L 191.07 141.72 L 191.29 142.27 L 194.42 138.70 L 194.83 139.05 " clip-path="url(#pe929c7379b)" style="fill: #2b748e"/> <path d="M 203.33 139.04 L 200.25 142.93 L 200.83 143.05 L 198.56 144.64 L 199.58 142.06 L 199.83 142.60 L 202.91 138.71 L 203.33 139.04 " clip-path="url(#pe929c7379b)" style="fill: #26828e"/> <path d="M 211.83 139.03 L 208.82 143.17 L 209.40 143.27 L 207.19 144.95 L 208.11 142.32 L 208.39 142.85 L 211.40 138.72 L 211.83 139.03 " clip-path="url(#pe929c7379b)" style="fill: #21908d"/> <path d="M 220.33 139.02 L 217.38 143.36 L 217.97 143.43 L 215.81 145.19 L 216.65 142.54 L 216.94 143.06 L 219.89 138.72 L 220.33 139.02 " clip-path="url(#pe929c7379b)" style="fill: #1e9d89"/> <path d="M 228.83 139.02 L 225.94 143.51 L 226.54 143.57 L 224.42 145.38 L 225.19 142.71 L 225.50 143.22 L 228.38 138.73 L 228.83 139.02 " clip-path="url(#pe929c7379b)" style="fill: #25ab82"/> <path d="M 66.93 120.31 L 66.93 113.88 L 66.40 114.15 L 67.20 111.49 L 68.00 114.15 L 67.47 113.88 L 67.47 120.31 L 66.93 120.31 " clip-path="url(#pe929c7379b)" style="fill: #1e9c89"/> <path d="M 75.43 120.32 L 75.15 113.91 L 74.63 114.20 L 75.32 111.50 L 76.23 114.13 L 75.68 113.88 L 75.96 120.29 L 75.43 120.32 " clip-path="url(#pe929c7379b)" style="fill: #228d8d"/> <path d="M 83.93 120.33 L 83.30 113.97 L 82.80 114.29 L 83.34 111.56 L 84.39 114.13 L 83.83 113.92 L 84.46 120.28 L 83.93 120.33 " clip-path="url(#pe929c7379b)" style="fill: #277f8e"/> <path d="M 92.42 120.35 L 91.37 114.11 L 90.89 114.46 L 91.23 111.71 L 92.46 114.20 L 91.89 114.02 L 92.95 120.26 L 92.42 120.35 " clip-path="url(#pe929c7379b)" style="fill: #2c718e"/> <path d="M 100.92 120.37 L 99.33 114.39 L 98.88 114.79 L 98.97 112.01 L 100.43 114.38 L 99.84 114.26 L 101.44 120.24 L 100.92 120.37 " clip-path="url(#pe929c7379b)" style="fill: #32648e"/> <path d="M 109.43 120.41 L 107.20 114.93 L 106.81 115.38 L 106.54 112.61 L 108.29 114.78 L 107.69 114.73 L 109.92 120.21 L 109.43 120.41 " clip-path="url(#pe929c7379b)" style="fill: #39568c"/> <path d="M 117.94 120.45 L 115.09 115.90 L 114.78 116.41 L 114.04 113.73 L 116.13 115.56 L 115.54 115.61 L 118.40 120.16 L 117.94 120.45 " clip-path="url(#pe929c7379b)" style="fill: #3e4a89"/> <path d="M 126.48 120.50 L 123.33 117.42 L 123.14 117.99 L 121.79 115.56 L 124.26 116.85 L 123.70 117.04 L 126.85 120.11 L 126.48 120.50 " clip-path="url(#pe929c7379b)" style="fill: #424086"/> <path d="M 135.04 120.54 L 132.38 119.18 L 132.37 119.78 L 130.36 117.85 L 133.10 118.35 L 132.62 118.71 L 135.28 120.07 L 135.04 120.54 " clip-path="url(#pe929c7379b)" style="fill: #443b84"/> <path d="M 143.62 120.57 L 141.83 120.30 L 142.01 120.86 L 139.50 119.68 L 142.25 119.28 L 141.91 119.77 L 143.70 120.04 L 143.62 120.57 " clip-path="url(#pe929c7379b)" style="fill: #443b84"/> <path d="M 152.19 120.57 L 150.43 120.81 L 150.76 121.30 L 148.02 120.87 L 150.55 119.72 L 150.36 120.28 L 152.11 120.04 L 152.19 120.57 " clip-path="url(#pe929c7379b)" style="fill: #414287"/> <path d="M 160.74 120.56 L 158.42 121.42 L 158.85 121.83 L 156.08 122.00 L 158.29 120.33 L 158.23 120.92 L 160.55 120.06 L 160.74 120.56 " clip-path="url(#pe929c7379b)" style="fill: #3d4d8a"/> <path d="M 169.27 120.54 L 166.49 122.12 L 166.99 122.45 L 164.28 123.07 L 166.20 121.06 L 166.23 121.65 L 169.01 120.07 L 169.27 120.54 " clip-path="url(#pe929c7379b)" style="fill: #375a8c"/> <path d="M 177.79 120.52 L 174.77 122.74 L 175.30 123.01 L 172.68 123.95 L 174.35 121.73 L 174.45 122.31 L 177.48 120.09 L 177.79 120.52 " clip-path="url(#pe929c7379b)" style="fill: #31678e"/> <path d="M 186.31 120.51 L 183.18 123.25 L 183.73 123.47 L 181.20 124.63 L 182.67 122.27 L 182.83 122.85 L 185.95 120.11 L 186.31 120.51 " clip-path="url(#pe929c7379b)" style="fill: #2b748e"/> <path d="M 194.81 120.49 L 191.66 123.65 L 192.22 123.84 L 189.78 125.16 L 191.09 122.71 L 191.28 123.27 L 194.44 120.12 L 194.81 120.49 " clip-path="url(#pe929c7379b)" style="fill: #26828e"/> <path d="M 203.32 120.48 L 200.18 123.96 L 200.75 124.12 L 198.37 125.56 L 199.57 123.05 L 199.78 123.61 L 202.92 120.13 L 203.32 120.48 " clip-path="url(#pe929c7379b)" style="fill: #21918c"/> <path d="M 211.82 120.48 L 208.71 124.21 L 209.29 124.35 L 206.98 125.89 L 208.06 123.33 L 208.30 123.87 L 211.41 120.14 L 211.82 120.48 " clip-path="url(#pe929c7379b)" style="fill: #1f9f88"/> <path d="M 220.32 120.47 L 217.26 124.42 L 217.84 124.53 L 215.58 126.14 L 216.58 123.55 L 216.84 124.09 L 219.90 120.14 L 220.32 120.47 " clip-path="url(#pe929c7379b)" style="fill: #27ad81"/> <path d="M 228.82 120.46 L 225.80 124.58 L 226.39 124.68 L 224.17 126.36 L 225.10 123.74 L 225.37 124.26 L 228.39 120.15 L 228.82 120.46 " clip-path="url(#pe929c7379b)" style="fill: #3dbc74"/> <path d="M 66.93 101.74 L 66.93 95.31 L 66.40 95.58 L 67.20 92.92 L 68.00 95.58 L 67.47 95.31 L 67.47 101.74 L 66.93 101.74 " clip-path="url(#pe929c7379b)" style="fill: #20a486"/> <path d="M 75.43 101.75 L 75.12 95.34 L 74.60 95.63 L 75.27 92.94 L 76.20 95.56 L 75.66 95.32 L 75.96 101.72 L 75.43 101.75 " clip-path="url(#pe929c7379b)" style="fill: #1f958b"/> <path d="M 83.93 101.77 L 83.24 95.42 L 82.74 95.74 L 83.24 93.01 L 84.33 95.57 L 83.77 95.36 L 84.46 101.71 L 83.93 101.77 " clip-path="url(#pe929c7379b)" style="fill: #24868e"/> <path d="M 92.42 101.79 L 91.26 95.59 L 90.79 95.95 L 91.08 93.19 L 92.36 95.66 L 91.79 95.49 L 92.95 101.69 L 92.42 101.79 " clip-path="url(#pe929c7379b)" style="fill: #2a788e"/> <path d="M 100.92 101.81 L 99.19 95.93 L 98.75 96.33 L 98.76 93.55 L 100.28 95.88 L 99.70 95.77 L 101.44 101.66 L 100.92 101.81 " clip-path="url(#pe929c7379b)" style="fill: #306a8e"/> <path d="M 109.43 101.85 L 107.04 96.55 L 106.67 97.01 L 106.30 94.26 L 108.12 96.35 L 107.53 96.33 L 109.92 101.63 L 109.43 101.85 " clip-path="url(#pe929c7379b)" style="fill: #365d8d"/> <path d="M 117.95 101.89 L 114.98 97.62 L 114.70 98.15 L 113.83 95.50 L 116.01 97.23 L 115.42 97.32 L 118.39 101.58 L 117.95 101.89 " clip-path="url(#pe929c7379b)" style="fill: #3b518b"/> <path d="M 126.49 101.94 L 123.36 99.19 L 123.21 99.76 L 121.73 97.40 L 124.26 98.56 L 123.71 98.79 L 126.84 101.54 L 126.49 101.94 " clip-path="url(#pe929c7379b)" style="fill: #3f4889"/> <path d="M 135.05 101.98 L 132.50 100.80 L 132.52 101.40 L 130.44 99.56 L 133.19 99.95 L 132.72 100.32 L 135.27 101.50 L 135.05 101.98 " clip-path="url(#pe929c7379b)" style="fill: #404588"/> <path d="M 143.62 102.00 L 141.86 101.76 L 142.05 102.32 L 139.52 101.17 L 142.27 100.74 L 141.93 101.23 L 143.69 101.47 L 143.62 102.00 " clip-path="url(#pe929c7379b)" style="fill: #3f4788"/> <path d="M 152.18 102.00 L 150.45 102.22 L 150.77 102.71 L 148.03 102.24 L 150.58 101.13 L 150.38 101.69 L 152.12 101.47 L 152.18 102.00 " clip-path="url(#pe929c7379b)" style="fill: #3d4e8a"/> <path d="M 160.73 101.99 L 158.50 102.74 L 158.93 103.16 L 156.15 103.25 L 158.42 101.64 L 158.33 102.23 L 160.56 101.48 L 160.73 101.99 " clip-path="url(#pe929c7379b)" style="fill: #375a8c"/> <path d="M 169.26 101.97 L 166.60 103.34 L 167.08 103.69 L 164.34 104.20 L 166.35 102.27 L 166.35 102.87 L 169.02 101.50 L 169.26 101.97 " clip-path="url(#pe929c7379b)" style="fill: #31668e"/> <path d="M 177.78 101.96 L 174.85 103.91 L 175.36 104.20 L 172.70 105.01 L 174.48 102.87 L 174.55 103.46 L 177.49 101.52 L 177.78 101.96 " clip-path="url(#pe929c7379b)" style="fill: #2c738e"/> <path d="M 186.30 101.95 L 183.22 104.38 L 183.76 104.63 L 181.17 105.66 L 182.77 103.38 L 182.89 103.96 L 185.96 101.53 L 186.30 101.95 " clip-path="url(#pe929c7379b)" style="fill: #26828e"/> <path d="M 194.80 101.93 L 191.66 104.77 L 192.22 104.98 L 189.71 106.18 L 191.15 103.80 L 191.31 104.37 L 194.45 101.54 L 194.80 101.93 " clip-path="url(#pe929c7379b)" style="fill: #21918c"/> <path d="M 203.31 101.93 L 200.15 105.08 L 200.72 105.27 L 198.27 106.59 L 199.59 104.14 L 199.78 104.70 L 202.93 101.55 L 203.31 101.93 " clip-path="url(#pe929c7379b)" style="fill: #1fa088"/> <path d="M 211.81 101.92 L 208.67 105.33 L 209.24 105.50 L 206.85 106.92 L 208.06 104.42 L 208.27 104.97 L 211.42 101.56 L 211.81 101.92 " clip-path="url(#pe929c7379b)" style="fill: #29af7f"/> <path d="M 220.31 101.91 L 217.19 105.54 L 217.77 105.69 L 215.42 107.18 L 216.56 104.64 L 216.79 105.19 L 219.91 101.56 L 220.31 101.91 " clip-path="url(#pe929c7379b)" style="fill: #40bd72"/> <path d="M 228.81 101.91 L 225.72 105.71 L 226.30 105.84 L 224.00 107.41 L 225.06 104.83 L 225.30 105.38 L 228.40 101.57 L 228.81 101.91 " clip-path="url(#pe929c7379b)" style="fill: #63cb5f"/> <path d="M 66.93 83.17 L 66.93 76.75 L 66.40 77.01 L 67.20 74.35 L 68.00 77.01 L 67.47 76.75 L 67.47 83.17 L 66.93 83.17 " clip-path="url(#pe929c7379b)" style="fill: #27ad81"/> <path d="M 75.43 83.18 L 75.10 76.78 L 74.58 77.07 L 75.24 74.37 L 76.17 76.99 L 75.63 76.75 L 75.96 83.15 L 75.43 83.18 " clip-path="url(#pe929c7379b)" style="fill: #1f9e89"/> <path d="M 83.93 83.20 L 83.18 76.87 L 82.68 77.19 L 83.17 74.46 L 84.27 77.01 L 83.71 76.81 L 84.45 83.14 L 83.93 83.20 " clip-path="url(#pe929c7379b)" style="fill: #218e8d"/> <path d="M 92.42 83.22 L 91.17 77.06 L 90.70 77.43 L 90.95 74.66 L 92.27 77.11 L 91.69 76.96 L 92.95 83.12 L 92.42 83.22 " clip-path="url(#pe929c7379b)" style="fill: #277f8e"/> <path d="M 100.93 83.25 L 99.07 77.45 L 98.64 77.87 L 98.59 75.09 L 100.16 77.38 L 99.57 77.29 L 101.43 83.09 L 100.93 83.25 " clip-path="url(#pe929c7379b)" style="fill: #2d718e"/> <path d="M 109.44 83.29 L 106.92 78.15 L 106.56 78.62 L 106.10 75.88 L 107.99 77.92 L 107.40 77.92 L 109.91 83.05 L 109.44 83.29 " clip-path="url(#pe929c7379b)" style="fill: #32648e"/> <path d="M 117.96 83.33 L 114.91 79.30 L 114.65 79.84 L 113.68 77.23 L 115.92 78.87 L 115.34 78.98 L 118.38 83.01 L 117.96 83.33 " clip-path="url(#pe929c7379b)" style="fill: #38598c"/> <path d="M 126.50 83.38 L 123.41 80.87 L 123.28 81.45 L 121.71 79.16 L 124.28 80.21 L 123.74 80.46 L 126.83 82.96 L 126.50 83.38 " clip-path="url(#pe929c7379b)" style="fill: #3c508b"/> <path d="M 135.06 83.41 L 132.60 82.37 L 132.63 82.96 L 130.50 81.19 L 133.26 81.49 L 132.81 81.88 L 135.26 82.92 L 135.06 83.41 " clip-path="url(#pe929c7379b)" style="fill: #3d4e8a"/> <path d="M 143.62 83.43 L 141.88 83.21 L 142.08 83.78 L 139.54 82.65 L 142.28 82.19 L 141.95 82.69 L 143.69 82.90 L 143.62 83.43 " clip-path="url(#pe929c7379b)" style="fill: #3b518b"/> <path d="M 152.18 83.43 L 150.46 83.63 L 150.78 84.13 L 148.05 83.63 L 150.60 82.54 L 150.40 83.10 L 152.12 82.90 L 152.18 83.43 " clip-path="url(#pe929c7379b)" style="fill: #375a8c"/> <path d="M 160.72 83.42 L 158.57 84.09 L 158.98 84.52 L 156.20 84.54 L 158.51 82.99 L 158.41 83.58 L 160.57 82.91 L 160.72 83.42 " clip-path="url(#pe929c7379b)" style="fill: #32658e"/> <path d="M 169.25 83.41 L 166.68 84.63 L 167.15 84.99 L 164.40 85.41 L 166.47 83.55 L 166.45 84.14 L 169.03 82.93 L 169.25 83.41 " clip-path="url(#pe929c7379b)" style="fill: #2c718e"/> <path d="M 177.77 83.40 L 174.92 85.14 L 175.42 85.45 L 172.73 86.16 L 174.59 84.09 L 174.64 84.68 L 177.50 82.94 L 177.77 83.40 " clip-path="url(#pe929c7379b)" style="fill: #27808e"/> <path d="M 186.29 83.38 L 183.27 85.58 L 183.80 85.86 L 181.17 86.78 L 182.86 84.57 L 182.95 85.15 L 185.97 82.95 L 186.29 83.38 " clip-path="url(#pe929c7379b)" style="fill: #21908d"/> <path d="M 194.80 83.37 L 191.69 85.95 L 192.23 86.19 L 189.68 87.28 L 191.21 84.97 L 191.35 85.55 L 194.45 82.96 L 194.80 83.37 " clip-path="url(#pe929c7379b)" style="fill: #1f9f88"/> <path d="M 203.30 83.36 L 200.16 86.26 L 200.71 86.47 L 198.21 87.69 L 199.63 85.30 L 199.80 85.87 L 202.94 82.97 L 203.30 83.36 " clip-path="url(#pe929c7379b)" style="fill: #29af7f"/> <path d="M 211.80 83.36 L 208.65 86.51 L 209.21 86.70 L 206.77 88.02 L 208.08 85.57 L 208.27 86.14 L 211.43 82.98 L 211.80 83.36 " clip-path="url(#pe929c7379b)" style="fill: #42be71"/> <path d="M 220.30 83.35 L 217.16 86.72 L 217.73 86.89 L 215.33 88.29 L 216.56 85.80 L 216.77 86.36 L 219.92 82.99 L 220.30 83.35 " clip-path="url(#pe929c7379b)" style="fill: #67cc5c"/> <path d="M 228.80 83.34 L 225.67 86.90 L 226.25 87.05 L 223.89 88.52 L 225.05 85.99 L 225.27 86.54 L 228.41 82.99 L 228.80 83.34 " clip-path="url(#pe929c7379b)" style="fill: #93d741"/> <path d="M 66.93 64.60 L 66.93 58.18 L 66.40 58.44 L 67.20 55.78 L 68.00 58.44 L 67.47 58.18 L 67.47 64.60 L 66.93 64.60 " clip-path="url(#pe929c7379b)" style="fill: #34b679"/> <path d="M 75.43 64.62 L 75.07 58.21 L 74.56 58.51 L 75.21 55.80 L 76.15 58.42 L 75.61 58.18 L 75.96 64.59 L 75.43 64.62 " clip-path="url(#pe929c7379b)" style="fill: #21a685"/> <path d="M 83.93 64.63 L 83.13 58.31 L 82.64 58.65 L 83.10 55.90 L 84.22 58.45 L 83.66 58.25 L 84.45 64.57 L 83.93 64.63 " clip-path="url(#pe929c7379b)" style="fill: #1f958b"/> <path d="M 92.43 64.66 L 91.09 58.54 L 90.63 58.91 L 90.84 56.14 L 92.19 58.57 L 91.61 58.42 L 92.95 64.54 L 92.43 64.66 " clip-path="url(#pe929c7379b)" style="fill: #25858e"/> <path d="M 100.93 64.69 L 98.96 58.97 L 98.55 59.39 L 98.44 56.61 L 100.06 58.87 L 99.47 58.79 L 101.43 64.51 L 100.93 64.69 " clip-path="url(#pe929c7379b)" style="fill: #2a778e"/> <path d="M 109.44 64.72 L 106.82 59.73 L 106.47 60.22 L 105.94 57.49 L 107.89 59.47 L 107.29 59.49 L 109.91 64.48 L 109.44 64.72 " clip-path="url(#pe929c7379b)" style="fill: #306a8e"/> <path d="M 117.96 64.77 L 114.87 60.95 L 114.63 61.49 L 113.57 58.92 L 115.87 60.49 L 115.29 60.61 L 118.38 64.43 L 117.96 64.77 " clip-path="url(#pe929c7379b)" style="fill: #355f8d"/> <path d="M 126.50 64.81 L 123.46 62.51 L 123.35 63.09 L 121.71 60.85 L 124.31 61.82 L 123.78 62.08 L 126.83 64.39 L 126.50 64.81 " clip-path="url(#pe929c7379b)" style="fill: #38598c"/> <path d="M 135.06 64.85 L 132.67 63.90 L 132.73 64.49 L 130.54 62.77 L 133.31 63.01 L 132.87 63.40 L 135.26 64.35 L 135.06 64.85 " clip-path="url(#pe929c7379b)" style="fill: #39568c"/> <path d="M 143.62 64.86 L 141.90 64.66 L 142.10 65.22 L 139.55 64.12 L 142.28 63.63 L 141.96 64.13 L 143.69 64.34 L 143.62 64.86 " clip-path="url(#pe929c7379b)" style="fill: #375b8d"/> <path d="M 152.18 64.87 L 150.47 65.05 L 150.79 65.55 L 148.05 65.03 L 150.62 63.96 L 150.41 64.52 L 152.12 64.34 L 152.18 64.87 " clip-path="url(#pe929c7379b)" style="fill: #32648e"/> <path d="M 160.72 64.86 L 158.62 65.46 L 159.02 65.90 L 156.24 65.87 L 158.58 64.37 L 158.47 64.95 L 160.57 64.34 L 160.72 64.86 " clip-path="url(#pe929c7379b)" style="fill: #2d708e"/> <path d="M 169.25 64.84 L 166.75 65.95 L 167.21 66.33 L 164.45 66.67 L 166.56 64.86 L 166.53 65.46 L 169.03 64.36 L 169.25 64.84 " clip-path="url(#pe929c7379b)" style="fill: #277e8e"/> <path d="M 177.77 64.83 L 174.98 66.42 L 175.48 66.75 L 172.77 67.37 L 174.69 65.36 L 174.72 65.96 L 177.50 64.37 L 177.77 64.83 " clip-path="url(#pe929c7379b)" style="fill: #228d8d"/> <path d="M 186.28 64.82 L 183.32 66.84 L 183.84 67.13 L 181.19 67.97 L 182.94 65.81 L 183.02 66.40 L 185.98 64.38 L 186.28 64.82 " clip-path="url(#pe929c7379b)" style="fill: #1e9d89"/> <path d="M 194.79 64.81 L 191.72 67.19 L 192.26 67.45 L 189.67 68.45 L 191.28 66.19 L 191.40 66.77 L 194.46 64.39 L 194.79 64.81 " clip-path="url(#pe929c7379b)" style="fill: #27ad81"/> <path d="M 203.29 64.80 L 200.17 67.49 L 200.72 67.72 L 198.18 68.85 L 199.68 66.51 L 199.82 67.08 L 202.95 64.40 L 203.29 64.80 " clip-path="url(#pe929c7379b)" style="fill: #40bd72"/> <path d="M 211.80 64.79 L 208.65 67.74 L 209.21 67.94 L 206.72 69.18 L 208.12 66.78 L 208.29 67.35 L 211.43 64.41 L 211.80 64.79 " clip-path="url(#pe929c7379b)" style="fill: #67cc5c"/> <path d="M 220.30 64.79 L 217.14 67.94 L 217.71 68.13 L 215.26 69.45 L 216.58 67.00 L 216.77 67.57 L 219.92 64.41 L 220.30 64.79 " clip-path="url(#pe929c7379b)" style="fill: #98d83e"/> <path d="M 228.80 64.78 L 225.65 68.12 L 226.22 68.29 L 223.81 69.68 L 225.06 67.19 L 225.26 67.75 L 228.41 64.42 L 228.80 64.78 " clip-path="url(#pe929c7379b)" style="fill: #cae11f"/> <path d="M 66.93 46.03 L 66.93 39.61 L 66.40 39.88 L 67.20 37.21 L 68.00 39.88 L 67.47 39.61 L 67.47 46.03 L 66.93 46.03 " clip-path="url(#pe929c7379b)" style="fill: #44bf70"/> <path d="M 75.43 46.05 L 75.05 39.65 L 74.54 39.94 L 75.18 37.24 L 76.13 39.85 L 75.58 39.62 L 75.96 46.02 L 75.43 46.05 " clip-path="url(#pe929c7379b)" style="fill: #27ad81"/> <path d="M 83.93 46.07 L 83.09 39.76 L 82.59 40.10 L 83.03 37.35 L 84.18 39.88 L 83.61 39.69 L 84.45 46.00 L 83.93 46.07 " clip-path="url(#pe929c7379b)" style="fill: #1e9d89"/> <path d="M 92.43 46.09 L 91.02 40.01 L 90.56 40.39 L 90.74 37.61 L 92.12 40.03 L 91.54 39.89 L 92.94 45.97 L 92.43 46.09 " clip-path="url(#pe929c7379b)" style="fill: #228c8d"/> <path d="M 100.93 46.12 L 98.88 40.48 L 98.47 40.91 L 98.31 38.13 L 99.97 40.36 L 99.38 40.30 L 101.43 45.94 L 100.93 46.12 " clip-path="url(#pe929c7379b)" style="fill: #287d8e"/> <path d="M 109.44 46.16 L 106.74 41.30 L 106.41 41.79 L 105.81 39.08 L 107.80 41.02 L 107.21 41.04 L 109.91 45.90 L 109.44 46.16 " clip-path="url(#pe929c7379b)" style="fill: #2d718e"/> <path d="M 117.97 46.21 L 114.85 42.56 L 114.62 43.11 L 113.49 40.57 L 115.83 42.07 L 115.25 42.22 L 118.37 45.86 L 117.97 46.21 " clip-path="url(#pe929c7379b)" style="fill: #31668e"/> <path d="M 126.51 46.25 L 123.51 44.10 L 123.41 44.69 L 121.71 42.49 L 124.34 43.39 L 123.82 43.67 L 126.82 45.82 L 126.51 46.25 " clip-path="url(#pe929c7379b)" style="fill: #34608d"/> <path d="M 135.07 46.28 L 132.74 45.41 L 132.80 46.00 L 130.59 44.32 L 133.36 44.50 L 132.92 44.91 L 135.25 45.78 L 135.07 46.28 " clip-path="url(#pe929c7379b)" style="fill: #355f8d"/> <path d="M 143.63 46.30 L 141.91 46.11 L 142.11 46.66 L 139.55 45.58 L 142.29 45.08 L 141.97 45.58 L 143.68 45.77 L 143.63 46.30 " clip-path="url(#pe929c7379b)" style="fill: #32648e"/> <path d="M 152.18 46.30 L 150.47 46.47 L 150.79 46.97 L 148.06 46.44 L 150.63 45.38 L 150.42 45.94 L 152.12 45.77 L 152.18 46.30 " clip-path="url(#pe929c7379b)" style="fill: #2e6e8e"/> <path d="M 160.72 46.29 L 158.66 46.85 L 159.05 47.29 L 156.27 47.22 L 158.63 45.75 L 158.52 46.34 L 160.58 45.77 L 160.72 46.29 " clip-path="url(#pe929c7379b)" style="fill: #297a8e"/> <path d="M 169.24 46.28 L 166.80 47.29 L 167.26 47.68 L 164.49 47.97 L 166.64 46.21 L 166.60 46.80 L 169.04 45.79 L 169.24 46.28 " clip-path="url(#pe929c7379b)" style="fill: #23898e"/> <path d="M 177.76 46.27 L 175.04 47.73 L 175.53 48.07 L 172.80 48.63 L 174.77 46.67 L 174.79 47.26 L 177.51 45.80 L 177.76 46.27 " clip-path="url(#pe929c7379b)" style="fill: #1f998a"/> <path d="M 186.27 46.26 L 183.37 48.13 L 183.88 48.43 L 181.21 49.20 L 183.01 47.09 L 183.08 47.68 L 185.99 45.81 L 186.27 46.26 " clip-path="url(#pe929c7379b)" style="fill: #25ab82"/> <path d="M 194.78 46.25 L 191.76 48.46 L 192.29 48.74 L 189.67 49.67 L 191.34 47.45 L 191.44 48.04 L 194.47 45.82 L 194.78 46.25 " clip-path="url(#pe929c7379b)" style="fill: #3dbc74"/> <path d="M 203.29 46.24 L 200.19 48.75 L 200.74 49.00 L 198.17 50.06 L 199.73 47.76 L 199.86 48.34 L 202.95 45.83 L 203.29 46.24 " clip-path="url(#pe929c7379b)" style="fill: #63cb5f"/> <path d="M 211.79 46.23 L 208.66 48.99 L 209.21 49.22 L 206.69 50.38 L 208.15 48.02 L 208.31 48.60 L 211.44 45.83 L 211.79 46.23 " clip-path="url(#pe929c7379b)" style="fill: #93d741"/> <path d="M 220.29 46.23 L 217.14 49.20 L 217.70 49.40 L 215.22 50.65 L 216.61 48.24 L 216.78 48.81 L 219.93 45.84 L 220.29 46.23 " clip-path="url(#pe929c7379b)" style="fill: #cae11f"/> <path d="M 228.79 46.22 L 225.64 49.37 L 226.20 49.56 L 223.76 50.88 L 225.07 48.43 L 225.26 49.00 L 228.42 45.84 L 228.79 46.22 " clip-path="url(#pe929c7379b)" style="fill: #fde725"/> </g> <g id="matplotlib.axis_1"> <g id="xtick_1"> <g id="line2d_1">  <g> <path d="M 0 0 L 0 3.5" transform="translate(67.20 416.47)" style="stroke: #000000; stroke-width: 0.8"/> </g> </g> <g id="text_1"> <text style="font-size: 10px; font-family: 'DejaVu Sans', 'Bitstream Vera Sans', 'Computer Modern Sans Serif', 'Lucida Grande', 'Verdana', 'Geneva', 'Lucid', 'Arial', 'Helvetica', 'Avant Garde', sans-serif; text-anchor: middle" x="67.20" y="431.07" transform="rotate(-0 67.20 431.07)">0</text> </g> </g> <g id="xtick_2"> <g id="line2d_2"> <g> <path d="M 0 0 L 0 3.5" transform="translate(107.55 416.47)" style="stroke: #000000; stroke-width: 0.8"/> </g> </g> <g id="text_2"> <text style="font-size: 10px; font-family: 'DejaVu Sans', 'Bitstream Vera Sans', 'Computer Modern Sans Serif', 'Lucida Grande', 'Verdana', 'Geneva', 'Lucid', 'Arial', 'Helvetica', 'Avant Garde', sans-serif; text-anchor: middle" x="107.55" y="431.07" transform="rotate(-0 107.55 431.07)">500</text> </g> </g> <g id="xtick_3"> <g id="line2d_3"> <g> <path d="M 0 0 L 0 3.5" transform="translate(147.90 416.47)" style="stroke: #000000; stroke-width: 0.8"/> </g> </g> <g id="text_3"> <text style="font-size: 10px; font-family: 'DejaVu Sans', 'Bitstream Vera Sans', 'Computer Modern Sans Serif', 'Lucida Grande', 'Verdana', 'Geneva', 'Lucid', 'Arial', 'Helvetica', 'Avant Garde', sans-serif; text-anchor: middle" x="147.90" y="431.07" transform="rotate(-0 147.90 431.07)">1000</text> </g> </g> <g id="xtick_4"> <g id="line2d_4"> <g> <path d="M 0 0 L 0 3.5" transform="translate(188.25 416.47)" style="stroke: #000000; stroke-width: 0.8"/> </g> </g> <g id="text_4"> <text style="font-size: 10px; font-family: 'DejaVu Sans', 'Bitstream Vera Sans', 'Computer Modern Sans Serif', 'Lucida Grande', 'Verdana', 'Geneva', 'Lucid', 'Arial', 'Helvetica', 'Avant Garde', sans-serif; text-anchor: middle" x="188.25" y="431.07" transform="rotate(-0 188.25 431.07)">1500</text> </g> </g> <g id="xtick_5"> <g id="line2d_5"> <g> <path d="M 0 0 L 0 3.5" transform="translate(228.61 416.47)" style="stroke: #000000; stroke-width: 0.8"/> </g> </g> <g id="text_5"> <text style="font-size: 10px; font-family: 'DejaVu Sans', 'Bitstream Vera Sans', 'Computer Modern Sans Serif', 'Lucida Grande', 'Verdana', 'Geneva', 'Lucid', 'Arial', 'Helvetica', 'Avant Garde', sans-serif; text-anchor: middle" x="228.61" y="431.07" transform="rotate(-0 228.61 431.07)">2000</text> </g> </g> <g id="text_6"> <text style="font-size: 16px; font-family: 'DejaVu Sans', 'Bitstream Vera Sans', 'Computer Modern Sans Serif', 'Lucida Grande', 'Verdana', 'Geneva', 'Lucid', 'Arial', 'Helvetica', 'Avant Garde', sans-serif; text-anchor: middle" x="147.90" y="449.31" transform="rotate(-0 147.90 449.31)">Especie u</text> </g> </g> <g id="matplotlib.axis_2"> <g id="ytick_1"> <g id="line2d_6">  <g> <path d="M 0 0 L -3.5 0" transform="translate(59.13 398.83)" style="stroke: #000000; stroke-width: 0.8"/> </g> </g> <g id="text_7"> <text style="font-size: 10px; font-family: 'DejaVu Sans', 'Bitstream Vera Sans', 'Computer Modern Sans Serif', 'Lucida Grande', 'Verdana', 'Geneva', 'Lucid', 'Arial', 'Helvetica', 'Avant Garde', sans-serif; text-anchor: end" x="52.13" y="402.63" transform="rotate(-0 52.13 402.63)">0</text> </g> </g> <g id="ytick_2"> <g id="line2d_7"> <g> <path d="M 0 0 L -3.5 0" transform="translate(59.13 354.73)" style="stroke: #000000; stroke-width: 0.8"/> </g> </g> <g id="text_8"> <text style="font-size: 10px; font-family: 'DejaVu Sans', 'Bitstream Vera Sans', 'Computer Modern Sans Serif', 'Lucida Grande', 'Verdana', 'Geneva', 'Lucid', 'Arial', 'Helvetica', 'Avant Garde', sans-serif; text-anchor: end" x="52.13" y="358.53" transform="rotate(-0 52.13 358.53)">250</text> </g> </g> <g id="ytick_3"> <g id="line2d_8"> <g> <path d="M 0 0 L -3.5 0" transform="translate(59.13 310.63)" style="stroke: #000000; stroke-width: 0.8"/> </g> </g> <g id="text_9"> <text style="font-size: 10px; font-family: 'DejaVu Sans', 'Bitstream Vera Sans', 'Computer Modern Sans Serif', 'Lucida Grande', 'Verdana', 'Geneva', 'Lucid', 'Arial', 'Helvetica', 'Avant Garde', sans-serif; text-anchor: end" x="52.13" y="314.43" transform="rotate(-0 52.13 314.43)">500</text> </g> </g> <g id="ytick_4"> <g id="line2d_9"> <g> <path d="M 0 0 L -3.5 0" transform="translate(59.13 266.53)" style="stroke: #000000; stroke-width: 0.8"/> </g> </g> <g id="text_10"> <text style="font-size: 10px; font-family: 'DejaVu Sans', 'Bitstream Vera Sans', 'Computer Modern Sans Serif', 'Lucida Grande', 'Verdana', 'Geneva', 'Lucid', 'Arial', 'Helvetica', 'Avant Garde', sans-serif; text-anchor: end" x="52.13" y="270.33" transform="rotate(-0 52.13 270.33)">750</text> </g> </g> <g id="ytick_5"> <g id="line2d_10"> <g> <path d="M 0 0 L -3.5 0" transform="translate(59.13 222.43)" style="stroke: #000000; stroke-width: 0.8"/> </g> </g> <g id="text_11"> <text style="font-size: 10px; font-family: 'DejaVu Sans', 'Bitstream Vera Sans', 'Computer Modern Sans Serif', 'Lucida Grande', 'Verdana', 'Geneva', 'Lucid', 'Arial', 'Helvetica', 'Avant Garde', sans-serif; text-anchor: end" x="52.13" y="226.23" transform="rotate(-0 52.13 226.23)">1000</text> </g> </g> <g id="ytick_6"> <g id="line2d_11"> <g> <path d="M 0 0 L -3.5 0" transform="translate(59.13 178.33)" style="stroke: #000000; stroke-width: 0.8"/> </g> </g> <g id="text_12"> <text style="font-size: 10px; font-family: 'DejaVu Sans', 'Bitstream Vera Sans', 'Computer Modern Sans Serif', 'Lucida Grande', 'Verdana', 'Geneva', 'Lucid', 'Arial', 'Helvetica', 'Avant Garde', sans-serif; text-anchor: end" x="52.13" y="182.13" transform="rotate(-0 52.13 182.13)">1250</text> </g> </g> <g id="ytick_7"> <g id="line2d_12"> <g> <path d="M 0 0 L -3.5 0" transform="translate(59.13 134.23)" style="stroke: #000000; stroke-width: 0.8"/> </g> </g> <g id="text_13"> <text style="font-size: 10px; font-family: 'DejaVu Sans', 'Bitstream Vera Sans', 'Computer Modern Sans Serif', 'Lucida Grande', 'Verdana', 'Geneva', 'Lucid', 'Arial', 'Helvetica', 'Avant Garde', sans-serif; text-anchor: end" x="52.13" y="138.03" transform="rotate(-0 52.13 138.03)">1500</text> </g> </g> <g id="ytick_8"> <g id="line2d_13"> <g> <path d="M 0 0 L -3.5 0" transform="translate(59.13 90.13)" style="stroke: #000000; stroke-width: 0.8"/> </g> </g> <g id="text_14"> <text style="font-size: 10px; font-family: 'DejaVu Sans', 'Bitstream Vera Sans', 'Computer Modern Sans Serif', 'Lucida Grande', 'Verdana', 'Geneva', 'Lucid', 'Arial', 'Helvetica', 'Avant Garde', sans-serif; text-anchor: end" x="52.13" y="93.93" transform="rotate(-0 52.13 93.93)">1750</text> </g> </g> <g id="ytick_9"> <g id="line2d_14"> <g> <path d="M 0 0 L -3.5 0" transform="translate(59.13 46.03)" style="stroke: #000000; stroke-width: 0.8"/> </g> </g> <g id="text_15"> <text style="font-size: 10px; font-family: 'DejaVu Sans', 'Bitstream Vera Sans', 'Computer Modern Sans Serif', 'Lucida Grande', 'Verdana', 'Geneva', 'Lucid', 'Arial', 'Helvetica', 'Avant Garde', sans-serif; text-anchor: end" x="52.13" y="49.83" transform="rotate(-0 52.13 49.83)">2000</text> </g> </g> <g id="text_16"> <text style="font-size: 16px; font-family: 'DejaVu Sans', 'Bitstream Vera Sans', 'Computer Modern Sans Serif', 'Lucida Grande', 'Verdana', 'Geneva', 'Lucid', 'Arial', 'Helvetica', 'Avant Garde', sans-serif; text-anchor: middle" x="19.35" y="222.43" transform="rotate(-90 19.35 222.43)">Especie v</text> </g> </g> <g id="line2d_15">  <g clip-path="url(#pe929c7379b)"> <path d="M 0 -3 L -0.67 -0.92 L -2.85 -0.92 L -1.08 0.35 L -1.76 2.42 L -0 1.14 L 1.76 2.42 L 1.08 0.35 L 2.85 -0.92 L 0.67 -0.92 z" transform="translate(147.90 222.43)" style="fill: #dc0a28; stroke: #dc0a28; stroke-linejoin: bevel"/> </g> </g> <g id="line2d_16">  <g clip-path="url(#pe929c7379b)"> <path d="M 0 -3 L -0.67 -0.92 L -2.85 -0.92 L -1.08 0.35 L -1.76 2.42 L -0 1.14 L 1.76 2.42 L 1.08 0.35 L 2.85 -0.92 L 0.67 -0.92 z" transform="translate(67.20 398.83)" style="fill: #2410c8; stroke: #2410c8; stroke-linejoin: bevel"/> </g> </g> <g id="line2d_17">  <g clip-path="url(#pe929c7379b)"> <path d="M 0 -3 L -0.67 -0.92 L -2.85 -0.92 L -1.08 0.35 L -1.76 2.42 L -0 1.14 L 1.76 2.42 L 1.08 0.35 L 2.85 -0.92 L 0.67 -0.92 z" transform="translate(107.55 363.55)" style="fill: #008000; stroke: #008000; stroke-linejoin: bevel"/> </g> </g> <g id="patch_3"> <path d="M 59.13 416.47 L 59.13 28.39 " style="fill: none; stroke: #000000; stroke-width: 0.8; stroke-linejoin: miter; stroke-linecap: square"/> </g> <g id="patch_4"> <path d="M 236.68 416.47 L 236.68 28.39 " style="fill: none; stroke: #000000; stroke-width: 0.8; stroke-linejoin: miter; stroke-linecap: square"/> </g> <g id="patch_5"> <path d="M 59.13 416.47 L 236.68 416.47 " style="fill: none; stroke: #000000; stroke-width: 0.8; stroke-linejoin: miter; stroke-linecap: square"/> </g> <g id="patch_6"> <path d="M 59.13 28.39 L 236.68 28.39 " style="fill: none; stroke: #000000; stroke-width: 0.8; stroke-linejoin: miter; stroke-linecap: square"/> </g> <g id="text_17"> <text style="font-weight: 700; font-size: 20px; font-family: 'DejaVu Sans', 'Bitstream Vera Sans', 'Computer Modern Sans Serif', 'Lucida Grande', 'Verdana', 'Geneva', 'Lucid', 'Arial', 'Helvetica', 'Avant Garde', sans-serif; text-anchor: middle" x="147.90" y="22.39" transform="rotate(-0 147.90 22.39)">Diagrama de Fases</text> </g> </g> <g id="axes_2"> <g id="patch_7"> <path d="M 272.18 416.47 L 449.73 416.47 L 449.73 28.39 L 272.18 28.39 z " style="fill: #ffffff"/> </g> <g id="matplotlib.axis_3"> <g id="xtick_6"> <g id="line2d_18"> <g> <path d="M 0 0 L 0 3.5" transform="translate(280.25 416.47)" style="stroke: #000000; stroke-width: 0.8"/> </g> </g> <g id="text_18"> <text style="font-size: 10px; font-family: 'DejaVu Sans', 'Bitstream Vera Sans', 'Computer Modern Sans Serif', 'Lucida Grande', 'Verdana', 'Geneva', 'Lucid', 'Arial', 'Helvetica', 'Avant Garde', sans-serif; text-anchor: middle" x="280.25" y="431.07" transform="rotate(-0 280.25 431.07)">0.0</text> </g> </g> <g id="xtick_7"> <g id="line2d_19"> <g> <path d="M 0 0 L 0 3.5" transform="translate(320.61 416.47)" style="stroke: #000000; stroke-width: 0.8"/> </g> </g> <g id="text_19"> <text style="font-size: 10px; font-family: 'DejaVu Sans', 'Bitstream Vera Sans', 'Computer Modern Sans Serif', 'Lucida Grande', 'Verdana', 'Geneva', 'Lucid', 'Arial', 'Helvetica', 'Avant Garde', sans-serif; text-anchor: middle" x="320.61" y="431.07" transform="rotate(-0 320.61 431.07)">2.5</text> </g> </g> <g id="xtick_8"> <g id="line2d_20"> <g> <path d="M 0 0 L 0 3.5" transform="translate(360.96 416.47)" style="stroke: #000000; stroke-width: 0.8"/> </g> </g> <g id="text_20"> <text style="font-size: 10px; font-family: 'DejaVu Sans', 'Bitstream Vera Sans', 'Computer Modern Sans Serif', 'Lucida Grande', 'Verdana', 'Geneva', 'Lucid', 'Arial', 'Helvetica', 'Avant Garde', sans-serif; text-anchor: middle" x="360.96" y="431.07" transform="rotate(-0 360.96 431.07)">5.0</text> </g> </g> <g id="xtick_9"> <g id="line2d_21"> <g> <path d="M 0 0 L 0 3.5" transform="translate(401.31 416.47)" style="stroke: #000000; stroke-width: 0.8"/> </g> </g> <g id="text_21"> <text style="font-size: 10px; font-family: 'DejaVu Sans', 'Bitstream Vera Sans', 'Computer Modern Sans Serif', 'Lucida Grande', 'Verdana', 'Geneva', 'Lucid', 'Arial', 'Helvetica', 'Avant Garde', sans-serif; text-anchor: middle" x="401.31" y="431.07" transform="rotate(-0 401.31 431.07)">7.5</text> </g> </g> <g id="xtick_10"> <g id="line2d_22"> <g> <path d="M 0 0 L 0 3.5" transform="translate(441.66 416.47)" style="stroke: #000000; stroke-width: 0.8"/> </g> </g> <g id="text_22"> <text style="font-size: 10px; font-family: 'DejaVu Sans', 'Bitstream Vera Sans', 'Computer Modern Sans Serif', 'Lucida Grande', 'Verdana', 'Geneva', 'Lucid', 'Arial', 'Helvetica', 'Avant Garde', sans-serif; text-anchor: middle" x="441.66" y="431.07" transform="rotate(-0 441.66 431.07)">10.0</text> </g> </g> </g> <g id="matplotlib.axis_4"> <g id="ytick_10"> <g id="line2d_23"> <g> <path d="M 0 0 L -3.5 0" transform="translate(272.18 398.83)" style="stroke: #000000; stroke-width: 0.8"/> </g> </g> <g id="text_23"> <text style="font-size: 10px; font-family: 'DejaVu Sans', 'Bitstream Vera Sans', 'Computer Modern Sans Serif', 'Lucida Grande', 'Verdana', 'Geneva', 'Lucid', 'Arial', 'Helvetica', 'Avant Garde', sans-serif; text-anchor: end" x="265.18" y="402.63" transform="rotate(-0 265.18 402.63)">200</text> </g> </g> <g id="ytick_11"> <g id="line2d_24"> <g> <path d="M 0 0 L -3.5 0" transform="translate(272.18 317.86)" style="stroke: #000000; stroke-width: 0.8"/> </g> </g> <g id="text_24"> <text style="font-size: 10px; font-family: 'DejaVu Sans', 'Bitstream Vera Sans', 'Computer Modern Sans Serif', 'Lucida Grande', 'Verdana', 'Geneva', 'Lucid', 'Arial', 'Helvetica', 'Avant Garde', sans-serif; text-anchor: end" x="265.18" y="321.66" transform="rotate(-0 265.18 321.66)">400</text> </g> </g> <g id="ytick_12"> <g id="line2d_25"> <g> <path d="M 0 0 L -3.5 0" transform="translate(272.18 236.89)" style="stroke: #000000; stroke-width: 0.8"/> </g> </g> <g id="text_25"> <text style="font-size: 10px; font-family: 'DejaVu Sans', 'Bitstream Vera Sans', 'Computer Modern Sans Serif', 'Lucida Grande', 'Verdana', 'Geneva', 'Lucid', 'Arial', 'Helvetica', 'Avant Garde', sans-serif; text-anchor: end" x="265.18" y="240.69" transform="rotate(-0 265.18 240.69)">600</text> </g> </g> <g id="ytick_13"> <g id="line2d_26"> <g> <path d="M 0 0 L -3.5 0" transform="translate(272.18 155.92)" style="stroke: #000000; stroke-width: 0.8"/> </g> </g> <g id="text_26"> <text style="font-size: 10px; font-family: 'DejaVu Sans', 'Bitstream Vera Sans', 'Computer Modern Sans Serif', 'Lucida Grande', 'Verdana', 'Geneva', 'Lucid', 'Arial', 'Helvetica', 'Avant Garde', sans-serif; text-anchor: end" x="265.18" y="159.72" transform="rotate(-0 265.18 159.72)">800</text> </g> </g> <g id="ytick_14"> <g id="line2d_27"> <g> <path d="M 0 0 L -3.5 0" transform="translate(272.18 74.95)" style="stroke: #000000; stroke-width: 0.8"/> </g> </g> <g id="text_27"> <text style="font-size: 10px; font-family: 'DejaVu Sans', 'Bitstream Vera Sans', 'Computer Modern Sans Serif', 'Lucida Grande', 'Verdana', 'Geneva', 'Lucid', 'Arial', 'Helvetica', 'Avant Garde', sans-serif; text-anchor: end" x="265.18" y="78.75" transform="rotate(-0 265.18 78.75)">1000</text> </g> </g> </g> <g id="line2d_28"> <path d="M 280.25 277.38 L 288.82 268.63 L 297.38 259.57 L 305.94 250.18 L 314.35 240.63 L 322.75 230.76 L 331.15 220.53 L 339.39 210.15 L 347.63 199.42 L 355.71 188.53 L 363.78 177.27 L 371.86 165.63 L 379.78 153.83 L 387.70 141.62 L 395.45 129.25 L 403.21 116.46 L 410.80 103.51 L 418.39 90.11 L 425.83 76.54 L 433.10 62.81 L 440.37 48.61 L 441.66 46.03 L 441.66 46.03 " clip-path="url(#p938e8c8de9)" style="fill: none; stroke: #dc0a28; stroke-width: 1.5; stroke-linecap: square"/> </g> <g id="line2d_29"> <path d="M 280.25 398.83 L 300.29 393.92 L 316.61 390.14 L 330.83 387.08 L 343.75 384.51 L 355.71 382.37 L 366.85 380.59 L 377.36 379.14 L 387.37 377.98 L 397.07 377.08 L 406.44 376.43 L 415.49 376.02 L 424.37 375.85 L 433.10 375.90 L 441.66 376.18 L 441.66 376.18 " clip-path="url(#p938e8c8de9)" style="fill: none; stroke: #2410c8; stroke-width: 1.5; stroke-linecap: square"/> </g> <g id="patch_8"> <path d="M 272.18 416.47 L 272.18 28.39 " style="fill: none; stroke: #000000; stroke-width: 0.8; stroke-linejoin: miter; stroke-linecap: square"/> </g> <g id="patch_9"> <path d="M 449.73 416.47 L 449.73 28.39 " style="fill: none; stroke: #000000; stroke-width: 0.8; stroke-linejoin: miter; stroke-linecap: square"/> </g> <g id="patch_10"> <path d="M 272.18 416.47 L 449.73 416.47 " style="fill: none; stroke: #000000; stroke-width: 0.8; stroke-linejoin: miter; stroke-linecap: square"/> </g> <g id="patch_11"> <path d="M 272.18 28.39 L 449.73 28.39 " style="fill: none; stroke: #000000; stroke-width: 0.8; stroke-linejoin: miter; stroke-linecap: square"/> </g> <g id="legend_1"> <g id="patch_12"> <path d="M 279.18 66.43 L 359.16 66.43 Q 361.16 66.43 361.16 64.43 L 361.16 35.39 Q 361.16 33.39 359.16 33.39 L 279.18 33.39 Q 277.18 33.39 277.18 35.39 L 277.18 64.43 Q 277.18 66.43 279.18 66.43 z " style="fill: #ffffff; opacity: 0.8; stroke: #cccccc; stroke-linejoin: miter"/> </g> <g id="line2d_30"> <path d="M 281.18 41.49 L 291.18 41.49 L 301.18 41.49 " style="fill: none; stroke: #dc0a28; stroke-width: 1.5; stroke-linecap: square"/> </g> <g id="text_28"> <text style="font-size: 10px; font-family: 'DejaVu Sans', 'Bitstream Vera Sans', 'Computer Modern Sans Serif', 'Lucida Grande', 'Verdana', 'Geneva', 'Lucid', 'Arial', 'Helvetica', 'Avant Garde', sans-serif; text-anchor: start" x="309.18" y="44.99" transform="rotate(-0 309.18 44.99)">Especie u</text> </g> <g id="line2d_31"> <path d="M 281.18 56.85 L 291.18 56.85 L 301.18 56.85 " style="fill: none; stroke: #2410c8; stroke-width: 1.5; stroke-linecap: square"/> </g> <g id="text_29"> <text style="font-size: 10px; font-family: 'DejaVu Sans', 'Bitstream Vera Sans', 'Computer Modern Sans Serif', 'Lucida Grande', 'Verdana', 'Geneva', 'Lucid', 'Arial', 'Helvetica', 'Avant Garde', sans-serif; text-anchor: start" x="309.18" y="60.35" transform="rotate(-0 309.18 60.35)">Especie v</text> </g> </g> </g> </g> <defs> <clipPath id="pe929c7379b"> <rect x="59.13" y="28.39" width="177.54" height="388.08"/> </clipPath> <clipPath id="p938e8c8de9"> <rect x="272.18" y="28.39" width="177.54" height="388.08"/> </clipPath> </defs> </svg> 
<div id="prompt" class="abs">In [<span style="color:#62ff70">9</span>]: </div>
</div>
<!-- console scrollbar -->
<div class="abs" style="left:1231.300px;top:71px;width:8.5px;height:595px;background:#151d26;border:1px solid #27323c;border-radius:3px"></div>
<div class="abs" style="left:1232.3px;top:555px;width:6.5px;height:54px;background:#6b717d;border-radius:3px"></div>

<!-- bottom tabs -->
<div class="abs" style="left:930px;top:679.7px;width:74.3px;height:18.3px;background:#505f69;border-top:2px solid #1464a0;font-size:9.5px"><span id="t_ipy" style="letter-spacing:0.013px;position:absolute;left:2.8px;top:3.2px;white-space:nowrap">IPython console</span></div>
<div class="abs" style="left:1005px;top:682.2px;width:36.8px;height:15.8px;background:#32414b;font-size:9.7px"><span id="t_hist" style="letter-spacing:0.063px;position:absolute;left:3.3px;top:1.2px;white-space:nowrap">History</span></div>

<div id="status" class="abs">
  <span id="t_s1" style="letter-spacing:-0.101px;left:688.9px">LSP Python: ready</span>
  <span id="t_s2" style="letter-spacing:0.209px;left:806.4px">conda: base (Python 3.8.3)</span>
  <span id="t_s3" style="letter-spacing:0.031px;left:951.4px">Line 31, Col 1</span>
  <span id="t_s4" style="letter-spacing:0.067px;left:1037.5px">UTF-8</span>
  <span id="t_s5" style="left:1091.7px">LF</span>
  <span id="t_s6" style="left:1127.8px">RW</span>
  <span id="t_s7" style="letter-spacing:-0.072px;left:1170.8px">Mem 53%</span>
</div>
<svg style="position:absolute;left:0;top:0;width:1246px;height:720px;pointer-events:none" viewBox="0 0 1246 720">
<!-- title icon -->
<circle cx="578" cy="7.6" r="3.700" fill="#9a9a9a"/><path d="M575 7.600h6M578 4.600v6M576 5.600l4 4M580 5.600l-4 4" stroke="#e6e6e6" stroke-width=".7"/>
<!-- separators / frames -->
<g fill="none" stroke="#2a3641" stroke-width="1">
  <path d="M0 57.300h720M0 75.400h720" stroke="#242f39"/>
  <rect x="2.500" y="76.500" width="715" height="617"/>
  <rect x="726" y="59.500" width="516.500" height="619"/>
  <path d="M722.500 41v656" stroke="#212c36" stroke-width="4"/>
</g>
<!-- browse tabs icons -->
<g fill="none" stroke="#fff" stroke-width="1.400" stroke-linejoin="round">
  <rect x="4.600" y="62.800" width="8.400" height="6.400" rx="1"/>
  <rect x="728" y="46.400" width="8.600" height="6.400" rx="1"/>
</g>
<path fill="#fff" d="M4.200 62.200h4.600v2.500h-4.600zM727.600 45.800h4.700v2.500h-4.700z"/>
<!-- hamburger left -->
<g fill="#fff">
  <rect x="706.700" y="62.100" width="8.700" height="1.250"/><rect x="706.700" y="65.050" width="8.700" height="1.250"/><rect x="706.700" y="68" width="8.700" height="1.250"/>
</g>
<!-- right pane buttons -->
<rect x="1195" y="45.300" width="8.600" height="8" fill="#8c919b"/>
<path fill="#fff" d="M1215.800 46.100h7.400l-3.600 6.400h-7.400z"/><path fill="#19232d" d="M1214.300 50.600h3.700l-.6 1.100h-3.700z"/>
<rect x="1227.500" y="42.700" width="18" height="13.600" rx="2" fill="#141c24" stroke="#1a5a8c" stroke-width="1"/>
<g fill="#fff">
  <rect x="1232.200" y="46.100" width="8.800" height="1.300"/><rect x="1232.200" y="49.050" width="8.800" height="1.300"/><rect x="1232.200" y="52" width="8.800" height="1.300"/>
</g>
<!-- scrollbar arrows -->
<g fill="#3c4650">
  <path d="M705.800 87l3.400-2.600 3.400 2.600zM705.800 684l3.400 2.600 3.400-2.600z"/>
  <path d="M1232.300 69.500l3.300-2.500 3.300 2.500zM1232.300 667.500l3.300 2.500 3.300-2.500z"/>
</g>
<!-- status icons -->
<g fill="none" stroke="#fff" stroke-width="1.200" stroke-linecap="round">
  <path d="M674 708.500l2.600 3.200 4.400-5.400"/><path d="M674.200 705.200a2.200 2.200 0 0 1 3.600-.8" stroke-width="1"/>
  <circle cx="795" cy="708.800" r="3.700"/><path d="M795 708.800v3.500M795 708.800l-3.100-1.700M795 708.800l3.100-1.700" stroke-width=".9"/>
</g>
<!-- corners -->
<path fill="#3f3a78" d="M0 0h3.500a3.500 3.500 0 0 0-3.500 3.500z"/>
<path fill="#3a3f6a" d="M1246 0h-2.200a2.200 2.200 0 0 1 2.200 2.200z"/>
<path fill="#5a55a8" d="M0 720h4a4 4 0 0 1-4-4z"/>
<path fill="#56627a" d="M1246 720h-4a4 4 0 0 0 4-4z"/>
</svg>

</body>
</html>
